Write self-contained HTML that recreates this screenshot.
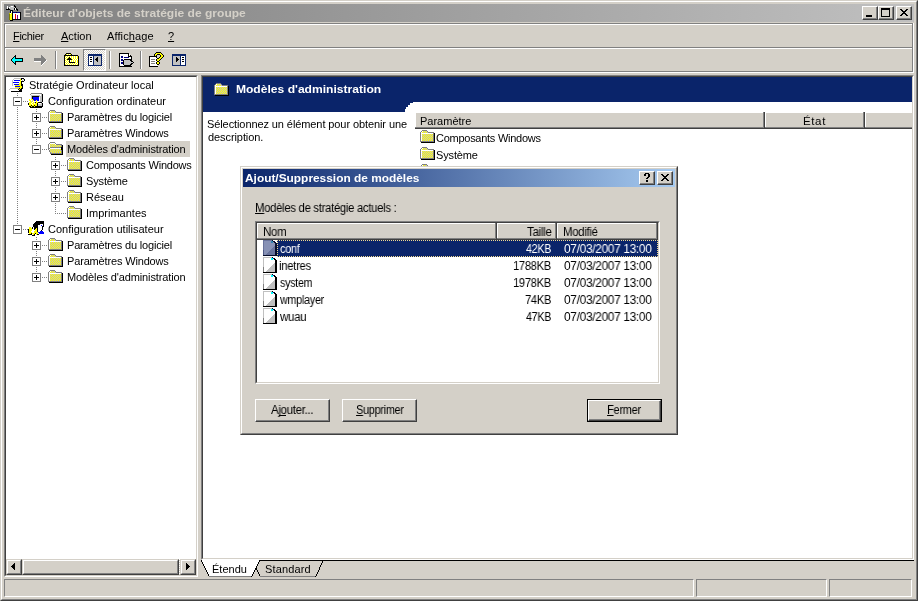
<!DOCTYPE html>
<html><head><meta charset="utf-8">
<style>
*{margin:0;padding:0;box-sizing:border-box}
html,body{width:918px;height:601px;overflow:hidden;background:#d4d0c8}
body{position:relative;font-family:"Liberation Sans",sans-serif;font-size:11px;color:#000}
.a{position:absolute}
.t{position:absolute;white-space:nowrap;line-height:13px;will-change:transform}
.raised{border:1px solid;border-color:#fff #404040 #404040 #fff;box-shadow:inset -1px -1px #808080;background:#d4d0c8}
.thin{border:1px solid;border-color:#808080 #fff #fff #808080}
.u{text-decoration:underline;text-decoration-skip-ink:none}
svg.a{overflow:visible}
</style></head><body>

<div class="a" style="left:0;top:0;width:918px;height:601px;border:1px solid;border-color:#d4d0c8 #404040 #404040 #d4d0c8"></div>
<div class="a" style="left:1px;top:1px;width:916px;height:599px;border:1px solid;border-color:#fff #808080 #808080 #fff"></div>
<div class="a" style="left:4px;top:4px;width:910px;height:18px;background:linear-gradient(to right,#808080,#c0c0c0)"></div>
<svg class="a" style="left:6px;top:5px" width="16" height="16" shape-rendering="crispEdges"><path fill="#000000" d="M8 0h1v1h-1zM8 1h2v1h-2zM9 2h1v1h-1zM2 3h1v1h-1zM8 3h1v1h-1zM10 3h1v1h-1zM0 4h4v1h-4zM8 4h1v1h-1zM10 4h2v1h-2zM4 5h3v1h-3zM11 5h1v1h-1zM4 6h1v1h-1zM6 6h1v1h-1zM4 7h1v1h-1zM6 7h1v1h-1zM10 7h1v1h-1zM14 7h1v1h-1zM6 8h1v1h-1zM14 8h1v1h-1zM6 9h1v1h-1zM14 9h1v1h-1zM6 10h1v1h-1zM14 10h1v1h-1zM6 11h1v1h-1zM14 11h1v1h-1zM6 12h1v1h-1zM14 12h1v1h-1zM6 13h1v1h-1zM14 13h1v1h-1zM6 14h9v1h-9zM4 15h3v1h-3z"/><path fill="#ffffff" d="M1 1h1v1h-1zM5 1h2v1h-2zM1 2h1v1h-1zM3 2h1v1h-1zM1 3h1v1h-1zM9 3h1v1h-1zM9 4h1v1h-1zM5 6h1v1h-1zM5 7h1v1h-1zM4 8h1v1h-1zM7 8h7v1h-7zM7 9h2v1h-2zM10 9h4v1h-4zM7 10h2v1h-2zM10 10h1v1h-1zM12 10h2v1h-2zM7 11h2v1h-2zM10 11h1v1h-1zM12 11h2v1h-2zM7 12h2v1h-2zM10 12h1v1h-1zM12 12h2v1h-2zM7 13h2v1h-2zM10 13h1v1h-1zM12 13h2v1h-2z"/><path fill="#c0c0c0" d="M4 1h1v1h-1zM7 1h1v1h-1zM4 2h5v1h-5zM3 3h5v1h-5zM5 4h3v1h-3z"/><path fill="#000080" d="M7 7h3v1h-3zM11 7h3v1h-3z"/><path fill="#c0c000" d="M3 8h1v1h-1z"/><path fill="#ffff00" d="M5 8h1v1h-1zM4 9h2v1h-2zM4 10h2v1h-2zM4 11h2v1h-2zM4 12h2v1h-2zM4 13h2v1h-2zM4 14h2v1h-2z"/><path fill="#808000" d="M3 9h1v1h-1zM3 10h1v1h-1zM3 11h1v1h-1zM3 12h1v1h-1zM3 13h1v1h-1zM3 14h1v1h-1z"/><path fill="#ff0000" d="M9 9h1v1h-1zM9 10h1v1h-1zM9 11h1v1h-1zM9 12h1v1h-1zM9 13h1v1h-1z"/><path fill="#800080" d="M11 10h1v1h-1zM11 11h1v1h-1zM11 12h1v1h-1zM11 13h1v1h-1z"/></svg>
<div class="t" style="left:23px;top:7px;font-size:11px;letter-spacing:0.0px;font-weight:bold;transform:scaleX(1.0941);transform-origin:1px 0;color:#d4d0c8">Éditeur d&#x27;objets de stratégie de groupe</div>
<div class="a raised" style="left:862px;top:6px;width:16px;height:14px"></div>
<div class="a raised" style="left:878px;top:6px;width:16px;height:14px"></div>
<div class="a raised" style="left:896px;top:6px;width:16px;height:14px"></div>
<div class="a" style="left:866px;top:15px;width:6px;height:2px;background:#000"></div>
<div class="a" style="left:881px;top:8px;width:9px;height:9px;border:1px solid #000;border-top-width:2px"></div>
<svg class="a" style="left:900px;top:9px" width="8" height="7" shape-rendering="crispEdges"><path d="M0 0h2v1h-2zM6 0h2v1h-2zM1 1h2v1h-2zM5 1h2v1h-2zM2 2h4v1h-4zM3 3h2v1h-2zM2 4h4v1h-4zM1 5h2v1h-2zM5 5h2v1h-2zM0 6h2v1h-2zM6 6h2v1h-2z" fill="#000"/></svg>
<div class="a" style="left:4px;top:23px;width:910px;height:1px;background:#808080"></div>
<div class="a" style="left:4px;top:24px;width:909px;height:1px;background:#fff"></div>
<div class="a" style="left:4px;top:23px;width:1px;height:49px;background:#808080"></div>
<div class="a" style="left:5px;top:24px;width:1px;height:48px;background:#fff"></div>
<div class="a" style="left:912px;top:23px;width:1px;height:49px;background:#808080"></div>
<div class="a" style="left:913px;top:23px;width:1px;height:50px;background:#fff"></div>
<div class="a" style="left:5px;top:47px;width:907px;height:1px;background:#808080"></div>
<div class="a" style="left:5px;top:48px;width:907px;height:1px;background:#fff"></div>
<div class="a" style="left:4px;top:71px;width:909px;height:1px;background:#808080"></div>
<div class="a" style="left:4px;top:72px;width:910px;height:1px;background:#fff"></div>
<div class="t" style="left:13px;top:30px;font-size:11px;letter-spacing:-0.3px"><span class="u">F</span>ichier</div>
<div class="t" style="left:61px;top:30px;font-size:11px;letter-spacing:0.0px"><span class="u">A</span>ction</div>
<div class="t" style="left:107px;top:30px;font-size:11px;letter-spacing:0.112px">Affic<span class="u">h</span>age</div>
<div class="t" style="left:168px;top:30px;font-size:11px;letter-spacing:0.0px"><span class="u">?</span></div>
<svg class="a" style="left:11px;top:55px" width="12" height="10" shape-rendering="crispEdges"><path fill="#000000" d="M4 0h1v1h-1zM3 1h2v1h-2zM2 2h1v1h-1zM4 2h1v1h-1zM1 3h1v1h-1zM4 3h8v1h-8zM0 4h1v1h-1zM11 4h1v1h-1zM0 5h1v1h-1zM11 5h1v1h-1zM1 6h1v1h-1zM4 6h8v1h-8zM2 7h1v1h-1zM4 7h1v1h-1zM3 8h2v1h-2zM4 9h1v1h-1z"/><path fill="#00ffff" d="M3 2h1v1h-1zM2 3h2v1h-2zM1 4h10v1h-10zM1 5h10v1h-10zM2 6h2v1h-2zM3 7h1v1h-1z"/></svg>
<svg class="a" style="left:34px;top:55px" width="13" height="11" shape-rendering="crispEdges"><path fill="#808080" d="M7 0h1v1h-1zM7 1h2v1h-2zM7 2h3v1h-3zM0 3h11v1h-11zM0 4h12v1h-12zM0 5h12v1h-12zM7 6h4v1h-4zM7 7h3v1h-3zM7 8h2v1h-2zM7 9h1v1h-1z"/><path fill="#ffffff" d="M12 5h1v1h-1zM0 6h7v1h-7zM11 6h1v1h-1zM10 7h1v1h-1zM9 8h1v1h-1zM8 9h1v1h-1zM7 10h1v1h-1z"/></svg>
<div class="a" style="left:55px;top:51px;width:1px;height:18px;background:#808080"></div>
<div class="a" style="left:56px;top:51px;width:1px;height:18px;background:#fff"></div>
<div class="a" style="left:109px;top:51px;width:1px;height:18px;background:#808080"></div>
<div class="a" style="left:110px;top:51px;width:1px;height:18px;background:#fff"></div>
<div class="a" style="left:140px;top:51px;width:1px;height:18px;background:#808080"></div>
<div class="a" style="left:141px;top:51px;width:1px;height:18px;background:#fff"></div>
<svg class="a" style="left:64px;top:53px" width="15" height="13" shape-rendering="crispEdges"><path fill="#000000" d="M2 0h5v1h-5zM1 1h1v1h-1zM7 1h1v1h-1zM0 2h14v1h-14zM0 3h1v1h-1zM14 3h1v1h-1zM0 4h1v1h-1zM5 4h1v1h-1zM14 4h1v1h-1zM0 5h1v1h-1zM4 5h3v1h-3zM14 5h1v1h-1zM0 6h1v1h-1zM3 6h5v1h-5zM14 6h1v1h-1zM0 7h1v1h-1zM5 7h1v1h-1zM14 7h1v1h-1zM0 8h1v1h-1zM5 8h1v1h-1zM14 8h1v1h-1zM0 9h1v1h-1zM5 9h6v1h-6zM14 9h1v1h-1zM0 10h1v1h-1zM14 10h1v1h-1zM0 11h1v1h-1zM14 11h1v1h-1zM0 12h15v1h-15z"/><path fill="#ffff00" d="M2 1h1v1h-1zM4 1h1v1h-1zM6 1h1v1h-1zM1 3h1v1h-1zM3 3h1v1h-1zM5 3h1v1h-1zM7 3h1v1h-1zM9 3h1v1h-1zM11 3h1v1h-1zM13 3h1v1h-1zM2 4h1v1h-1zM4 4h1v1h-1zM7 4h1v1h-1zM9 4h1v1h-1zM11 4h1v1h-1zM13 4h1v1h-1zM1 5h1v1h-1zM3 5h1v1h-1zM7 5h1v1h-1zM9 5h1v1h-1zM11 5h1v1h-1zM13 5h1v1h-1zM2 6h1v1h-1zM8 6h1v1h-1zM10 6h1v1h-1zM12 6h1v1h-1zM1 7h1v1h-1zM3 7h1v1h-1zM7 7h1v1h-1zM9 7h1v1h-1zM11 7h1v1h-1zM13 7h1v1h-1zM2 8h1v1h-1zM4 8h1v1h-1zM7 8h1v1h-1zM9 8h1v1h-1zM11 8h1v1h-1zM13 8h1v1h-1zM1 9h1v1h-1zM3 9h1v1h-1zM11 9h1v1h-1zM13 9h1v1h-1zM2 10h1v1h-1zM4 10h1v1h-1zM6 10h1v1h-1zM8 10h1v1h-1zM10 10h1v1h-1zM12 10h1v1h-1zM1 11h1v1h-1zM3 11h1v1h-1zM5 11h1v1h-1zM7 11h1v1h-1zM9 11h1v1h-1zM11 11h1v1h-1zM13 11h1v1h-1z"/><path fill="#ffffff" d="M3 1h1v1h-1zM5 1h1v1h-1zM2 3h1v1h-1zM4 3h1v1h-1zM6 3h1v1h-1zM8 3h1v1h-1zM10 3h1v1h-1zM12 3h1v1h-1zM1 4h1v1h-1zM3 4h1v1h-1zM6 4h1v1h-1zM8 4h1v1h-1zM10 4h1v1h-1zM12 4h1v1h-1zM2 5h1v1h-1zM8 5h1v1h-1zM10 5h1v1h-1zM12 5h1v1h-1zM1 6h1v1h-1zM9 6h1v1h-1zM11 6h1v1h-1zM13 6h1v1h-1zM2 7h1v1h-1zM4 7h1v1h-1zM6 7h1v1h-1zM8 7h1v1h-1zM10 7h1v1h-1zM12 7h1v1h-1zM1 8h1v1h-1zM3 8h1v1h-1zM6 8h1v1h-1zM8 8h1v1h-1zM10 8h1v1h-1zM12 8h1v1h-1zM2 9h1v1h-1zM4 9h1v1h-1zM12 9h1v1h-1zM1 10h1v1h-1zM3 10h1v1h-1zM5 10h1v1h-1zM7 10h1v1h-1zM9 10h1v1h-1zM11 10h1v1h-1zM13 10h1v1h-1zM2 11h1v1h-1zM4 11h1v1h-1zM6 11h1v1h-1zM8 11h1v1h-1zM10 11h1v1h-1zM12 11h1v1h-1z"/></svg>
<div class="a" style="left:83px;top:49px;width:23px;height:22px;border:1px solid;border-color:#808080 #fff #fff #808080;background:repeating-conic-gradient(#fff 0 25%,#d4d0c8 0 50%) 0 0/2px 2px"></div>
<svg class="a" style="left:88px;top:54px" width="14" height="12" shape-rendering="crispEdges"><path fill="#0a246a" d="M0 0h14v1h-14zM0 1h14v1h-14zM0 2h1v1h-1zM5 2h1v1h-1zM13 2h1v1h-1zM0 3h1v1h-1zM5 3h1v1h-1zM13 3h1v1h-1zM0 4h1v1h-1zM5 4h1v1h-1zM13 4h1v1h-1zM0 5h1v1h-1zM5 5h1v1h-1zM13 5h1v1h-1zM0 6h1v1h-1zM5 6h1v1h-1zM13 6h1v1h-1zM0 7h1v1h-1zM5 7h1v1h-1zM13 7h1v1h-1zM0 8h1v1h-1zM5 8h1v1h-1zM13 8h1v1h-1zM0 9h1v1h-1zM5 9h1v1h-1zM13 9h1v1h-1zM0 10h1v1h-1zM5 10h1v1h-1zM13 10h1v1h-1zM0 11h14v1h-14z"/><path fill="#ffffff" d="M1 2h4v1h-4zM1 3h1v1h-1zM4 3h1v1h-1zM1 4h4v1h-4zM1 5h1v1h-1zM4 5h1v1h-1zM1 6h4v1h-4zM1 7h1v1h-1zM4 7h1v1h-1zM1 8h4v1h-4zM1 9h4v1h-4zM1 10h4v1h-4z"/><path fill="#c0c0c0" d="M6 2h7v1h-7zM6 3h3v1h-3zM10 3h3v1h-3zM6 4h2v1h-2zM10 4h3v1h-3zM6 5h1v1h-1zM10 5h3v1h-3zM6 6h2v1h-2zM10 6h3v1h-3zM6 7h3v1h-3zM10 7h3v1h-3zM6 8h7v1h-7zM6 9h7v1h-7zM6 10h7v1h-7z"/><path fill="#000000" d="M2 3h2v1h-2zM9 3h1v1h-1zM8 4h2v1h-2zM2 5h2v1h-2zM7 5h3v1h-3zM8 6h2v1h-2zM2 7h2v1h-2zM9 7h1v1h-1z"/></svg>
<svg class="a" style="left:119px;top:53px" width="15" height="14" shape-rendering="crispEdges"><path fill="#000000" d="M0 0h10v1h-10zM0 1h1v1h-1zM9 1h1v1h-1zM0 2h1v1h-1zM9 2h1v1h-1zM11 2h1v1h-1zM0 3h1v1h-1zM9 3h4v1h-4zM0 4h1v1h-1zM12 4h1v1h-1zM0 5h1v1h-1zM12 5h1v1h-1zM0 6h1v1h-1zM5 6h8v1h-8zM0 7h1v1h-1zM4 7h1v1h-1zM11 7h2v1h-2zM0 8h1v1h-1zM4 8h1v1h-1zM12 8h2v1h-2zM0 9h1v1h-1zM4 9h1v1h-1zM14 9h1v1h-1zM0 10h1v1h-1zM4 10h1v1h-1zM12 10h2v1h-2zM0 11h1v1h-1zM4 11h1v1h-1zM11 11h2v1h-2zM0 12h1v1h-1zM5 12h7v1h-7zM0 13h13v1h-13z"/><path fill="#ffffff" d="M1 1h8v1h-8zM10 1h1v1h-1zM1 2h8v1h-8zM10 2h1v1h-1zM1 3h1v1h-1zM4 3h5v1h-5zM1 4h1v1h-1zM4 4h1v1h-1zM10 4h2v1h-2zM1 5h11v1h-11zM1 6h1v1h-1zM4 6h1v1h-1zM1 7h1v1h-1zM1 8h3v1h-3zM1 9h1v1h-1zM1 10h1v1h-1zM1 11h3v1h-3zM1 12h4v1h-4z"/><path fill="#000080" d="M2 3h2v1h-2zM2 4h2v1h-2zM5 4h5v1h-5zM2 6h2v1h-2zM2 7h2v1h-2zM2 9h2v1h-2zM2 10h2v1h-2z"/><path fill="#c0c0c0" d="M5 7h6v1h-6zM5 8h7v1h-7zM5 9h9v1h-9zM5 10h7v1h-7zM5 11h6v1h-6z"/></svg>
<svg class="a" style="left:149px;top:52px" width="15" height="15" shape-rendering="crispEdges"><path fill="#000000" d="M7 0h5v1h-5zM6 1h1v1h-1zM12 1h1v1h-1zM5 2h1v1h-1zM8 2h3v1h-3zM13 2h1v1h-1zM5 3h1v1h-1zM7 3h1v1h-1zM11 3h1v1h-1zM14 3h1v1h-1zM0 4h8v1h-8zM11 4h1v1h-1zM14 4h1v1h-1zM0 5h1v1h-1zM7 5h1v1h-1zM10 5h1v1h-1zM13 5h1v1h-1zM0 6h1v1h-1zM8 6h2v1h-2zM12 6h1v1h-1zM0 7h1v1h-1zM7 7h1v1h-1zM11 7h1v1h-1zM0 8h1v1h-1zM7 8h1v1h-1zM10 8h1v1h-1zM0 9h1v1h-1zM8 9h2v1h-2zM0 10h1v1h-1zM7 10h1v1h-1zM10 10h1v1h-1zM0 11h1v1h-1zM7 11h1v1h-1zM10 11h1v1h-1zM0 12h1v1h-1zM8 12h2v1h-2zM0 13h1v1h-1zM0 14h9v1h-9z"/><path fill="#ffff00" d="M7 1h5v1h-5zM6 2h2v1h-2zM11 2h2v1h-2zM6 3h1v1h-1zM12 3h2v1h-2zM12 4h2v1h-2zM11 5h2v1h-2zM10 6h2v1h-2zM8 7h3v1h-3zM8 8h2v1h-2zM8 10h2v1h-2zM8 11h2v1h-2z"/><path fill="#ffffff" d="M1 5h6v1h-6zM1 6h7v1h-7zM1 7h1v1h-1zM6 7h1v1h-1zM1 8h6v1h-6zM1 9h1v1h-1zM6 9h2v1h-2zM1 10h6v1h-6zM1 11h1v1h-1zM6 11h1v1h-1zM1 12h7v1h-7zM1 13h8v1h-8z"/><path fill="#808080" d="M2 7h4v1h-4zM2 9h4v1h-4zM2 11h4v1h-4z"/></svg>
<svg class="a" style="left:172px;top:54px" width="14" height="12" shape-rendering="crispEdges"><path fill="#0a246a" d="M0 0h14v1h-14zM0 1h14v1h-14zM0 2h1v1h-1zM8 2h1v1h-1zM13 2h1v1h-1zM0 3h1v1h-1zM8 3h1v1h-1zM13 3h1v1h-1zM0 4h1v1h-1zM8 4h1v1h-1zM13 4h1v1h-1zM0 5h1v1h-1zM8 5h1v1h-1zM13 5h1v1h-1zM0 6h1v1h-1zM8 6h1v1h-1zM13 6h1v1h-1zM0 7h1v1h-1zM8 7h1v1h-1zM13 7h1v1h-1zM0 8h1v1h-1zM8 8h1v1h-1zM13 8h1v1h-1zM0 9h1v1h-1zM8 9h1v1h-1zM13 9h1v1h-1zM0 10h1v1h-1zM8 10h1v1h-1zM13 10h1v1h-1zM0 11h14v1h-14z"/><path fill="#c0c0c0" d="M1 2h7v1h-7zM1 3h3v1h-3zM5 3h3v1h-3zM1 4h3v1h-3zM6 4h2v1h-2zM1 5h3v1h-3zM7 5h1v1h-1zM1 6h3v1h-3zM6 6h2v1h-2zM1 7h3v1h-3zM5 7h3v1h-3zM1 8h7v1h-7zM1 9h7v1h-7zM1 10h7v1h-7z"/><path fill="#ffffff" d="M9 2h4v1h-4zM9 3h1v1h-1zM12 3h1v1h-1zM9 4h4v1h-4zM9 5h1v1h-1zM12 5h1v1h-1zM9 6h4v1h-4zM9 7h1v1h-1zM12 7h1v1h-1zM9 8h4v1h-4zM9 9h4v1h-4zM9 10h4v1h-4z"/><path fill="#000000" d="M4 3h1v1h-1zM10 3h2v1h-2zM4 4h2v1h-2zM4 5h3v1h-3zM10 5h2v1h-2zM4 6h2v1h-2zM4 7h1v1h-1zM10 7h2v1h-2z"/></svg>
<div class="a" style="left:4px;top:75px;width:194px;height:502px;background:#fff;border:1px solid;border-color:#808080 #fff #fff #808080"><div class="a" style="left:0;top:0;right:0;bottom:0;border:1px solid;border-color:#404040 #d4d0c8 #d4d0c8 #404040"></div></div>
<div class="a" style="left:66px;top:141px;width:124px;height:16px;background:#d4d0c8"></div>
<div class="a" style="left:17px;top:93px;width:1px;height:137px;background:repeating-linear-gradient(to bottom,#808080 0 1px,transparent 1px 2px)"></div>
<div class="a" style="left:36px;top:109px;width:1px;height:41px;background:repeating-linear-gradient(to bottom,#808080 0 1px,transparent 1px 2px)"></div>
<div class="a" style="left:55px;top:157px;width:1px;height:57px;background:repeating-linear-gradient(to bottom,#808080 0 1px,transparent 1px 2px)"></div>
<div class="a" style="left:36px;top:237px;width:1px;height:41px;background:repeating-linear-gradient(to bottom,#808080 0 1px,transparent 1px 2px)"></div>
<div class="a" style="left:23px;top:101px;width:6px;height:1px;background:repeating-linear-gradient(to right,#808080 0 1px,transparent 1px 2px)"></div>
<div class="a" style="left:23px;top:229px;width:6px;height:1px;background:repeating-linear-gradient(to right,#808080 0 1px,transparent 1px 2px)"></div>
<div class="a" style="left:42px;top:117px;width:6px;height:1px;background:repeating-linear-gradient(to right,#808080 0 1px,transparent 1px 2px)"></div>
<div class="a" style="left:42px;top:133px;width:6px;height:1px;background:repeating-linear-gradient(to right,#808080 0 1px,transparent 1px 2px)"></div>
<div class="a" style="left:42px;top:149px;width:6px;height:1px;background:repeating-linear-gradient(to right,#808080 0 1px,transparent 1px 2px)"></div>
<div class="a" style="left:42px;top:245px;width:6px;height:1px;background:repeating-linear-gradient(to right,#808080 0 1px,transparent 1px 2px)"></div>
<div class="a" style="left:42px;top:261px;width:6px;height:1px;background:repeating-linear-gradient(to right,#808080 0 1px,transparent 1px 2px)"></div>
<div class="a" style="left:42px;top:277px;width:6px;height:1px;background:repeating-linear-gradient(to right,#808080 0 1px,transparent 1px 2px)"></div>
<div class="a" style="left:61px;top:165px;width:6px;height:1px;background:repeating-linear-gradient(to right,#808080 0 1px,transparent 1px 2px)"></div>
<div class="a" style="left:61px;top:181px;width:6px;height:1px;background:repeating-linear-gradient(to right,#808080 0 1px,transparent 1px 2px)"></div>
<div class="a" style="left:61px;top:197px;width:6px;height:1px;background:repeating-linear-gradient(to right,#808080 0 1px,transparent 1px 2px)"></div>
<div class="a" style="left:55px;top:213px;width:12px;height:1px;background:repeating-linear-gradient(to right,#808080 0 1px,transparent 1px 2px)"></div>
<div class="a" style="left:13px;top:97px;width:9px;height:9px;border:1px solid #808080;background:#fff"></div><div class="a" style="left:15px;top:101px;width:5px;height:1px;background:#000"></div>
<div class="a" style="left:13px;top:225px;width:9px;height:9px;border:1px solid #808080;background:#fff"></div><div class="a" style="left:15px;top:229px;width:5px;height:1px;background:#000"></div>
<div class="a" style="left:32px;top:113px;width:9px;height:9px;border:1px solid #808080;background:#fff"></div><div class="a" style="left:34px;top:117px;width:5px;height:1px;background:#000"></div><div class="a" style="left:36px;top:115px;width:1px;height:5px;background:#000"></div>
<div class="a" style="left:32px;top:129px;width:9px;height:9px;border:1px solid #808080;background:#fff"></div><div class="a" style="left:34px;top:133px;width:5px;height:1px;background:#000"></div><div class="a" style="left:36px;top:131px;width:1px;height:5px;background:#000"></div>
<div class="a" style="left:32px;top:241px;width:9px;height:9px;border:1px solid #808080;background:#fff"></div><div class="a" style="left:34px;top:245px;width:5px;height:1px;background:#000"></div><div class="a" style="left:36px;top:243px;width:1px;height:5px;background:#000"></div>
<div class="a" style="left:32px;top:257px;width:9px;height:9px;border:1px solid #808080;background:#fff"></div><div class="a" style="left:34px;top:261px;width:5px;height:1px;background:#000"></div><div class="a" style="left:36px;top:259px;width:1px;height:5px;background:#000"></div>
<div class="a" style="left:32px;top:273px;width:9px;height:9px;border:1px solid #808080;background:#fff"></div><div class="a" style="left:34px;top:277px;width:5px;height:1px;background:#000"></div><div class="a" style="left:36px;top:275px;width:1px;height:5px;background:#000"></div>
<div class="a" style="left:32px;top:145px;width:9px;height:9px;border:1px solid #808080;background:#fff"></div><div class="a" style="left:34px;top:149px;width:5px;height:1px;background:#000"></div>
<div class="a" style="left:51px;top:161px;width:9px;height:9px;border:1px solid #808080;background:#fff"></div><div class="a" style="left:53px;top:165px;width:5px;height:1px;background:#000"></div><div class="a" style="left:55px;top:163px;width:1px;height:5px;background:#000"></div>
<div class="a" style="left:51px;top:177px;width:9px;height:9px;border:1px solid #808080;background:#fff"></div><div class="a" style="left:53px;top:181px;width:5px;height:1px;background:#000"></div><div class="a" style="left:55px;top:179px;width:1px;height:5px;background:#000"></div>
<div class="a" style="left:51px;top:193px;width:9px;height:9px;border:1px solid #808080;background:#fff"></div><div class="a" style="left:53px;top:197px;width:5px;height:1px;background:#000"></div><div class="a" style="left:55px;top:195px;width:1px;height:5px;background:#000"></div>
<svg class="a" style="left:9px;top:78px" width="16" height="14" shape-rendering="crispEdges"><path fill="#c0c0c0" d="M5 0h7v1h-7zM4 1h1v1h-1zM14 1h1v1h-1zM3 2h1v1h-1zM13 2h1v1h-1zM3 3h1v1h-1zM3 4h1v1h-1zM3 5h1v1h-1zM3 6h1v1h-1zM3 7h1v1h-1zM1 10h9v1h-9zM0 11h1v1h-1z"/><path fill="#000000" d="M12 0h3v1h-3zM12 1h1v1h-1zM15 1h1v1h-1zM15 2h1v1h-1zM12 3h3v1h-3zM12 4h1v1h-1zM12 5h1v1h-1zM12 6h2v1h-2zM12 7h2v1h-2zM13 8h1v1h-1zM13 9h1v1h-1zM10 10h1v1h-1zM12 10h2v1h-2zM9 11h1v1h-1zM11 11h2v1h-2zM10 12h3v1h-3zM2 13h11v1h-11z"/><path fill="#ffffff" d="M5 1h6v1h-6zM13 1h1v1h-1zM4 2h1v1h-1zM12 2h1v1h-1zM14 2h1v1h-1zM4 3h7v1h-7zM10 4h1v1h-1zM4 5h6v1h-6zM4 6h1v1h-1zM4 7h2v1h-2zM4 8h2v1h-2zM4 9h2v1h-2zM1 11h8v1h-8zM1 12h9v1h-9z"/><path fill="#ffff00" d="M11 1h1v1h-1zM11 2h1v1h-1zM11 3h1v1h-1zM11 4h1v1h-1zM10 5h2v1h-2zM10 6h2v1h-2zM6 7h6v1h-6zM11 8h2v1h-2zM6 9h7v1h-7zM11 10h1v1h-1zM10 11h1v1h-1z"/><path fill="#0000ff" d="M5 2h6v1h-6zM4 4h6v1h-6zM5 6h5v1h-5zM6 8h5v1h-5z"/></svg>
<svg class="a" style="left:28px;top:92px" width="16" height="16" shape-rendering="crispEdges"><path fill="#808080" d="M3 1h11v1h-11zM2 2h1v1h-1z"/><path fill="#ffffff" d="M3 2h10v1h-10zM2 3h1v1h-1zM12 3h1v1h-1zM2 4h1v1h-1zM2 5h1v1h-1zM11 5h1v1h-1zM2 6h1v1h-1zM11 6h1v1h-1zM2 7h1v1h-1zM11 7h1v1h-1zM3 8h1v1h-1zM11 8h1v1h-1zM5 9h3v1h-3zM9 9h3v1h-3zM4 10h1v1h-1zM3 11h1v1h-1zM6 11h1v1h-1zM10 11h3v1h-3zM4 12h1v1h-1z"/><path fill="#c0c0c0" d="M13 2h1v1h-1zM3 3h9v1h-9zM13 3h1v1h-1zM3 4h1v1h-1zM11 4h3v1h-3zM3 5h1v1h-1zM12 5h2v1h-2zM3 6h1v1h-1zM12 6h2v1h-2zM12 7h2v1h-2zM4 8h1v1h-1zM12 8h2v1h-2zM3 9h1v1h-1zM12 9h2v1h-2zM6 10h1v1h-1zM13 11h1v1h-1zM10 12h4v1h-4zM10 13h4v1h-4z"/><path fill="#000000" d="M14 2h1v1h-1zM14 3h1v1h-1zM4 4h7v1h-7zM14 4h1v1h-1zM4 5h1v1h-1zM14 5h1v1h-1zM4 6h1v1h-1zM14 6h1v1h-1zM14 7h1v1h-1zM14 8h1v1h-1zM14 9h1v1h-1zM7 10h1v1h-1zM10 10h4v1h-4zM0 11h1v1h-1zM9 11h1v1h-1zM14 11h1v1h-1zM0 12h1v1h-1zM9 12h1v1h-1zM14 12h1v1h-1zM3 13h1v1h-1zM6 13h1v1h-1zM9 13h1v1h-1zM14 13h1v1h-1zM1 14h2v1h-2zM4 14h2v1h-2zM7 14h8v1h-8zM2 15h12v1h-12z"/><path fill="#0000ff" d="M5 5h6v1h-6zM5 6h6v1h-6zM5 7h6v1h-6zM6 8h2v1h-2zM9 8h2v1h-2z"/><path fill="#ffff00" d="M1 7h1v1h-1zM3 7h2v1h-2zM1 8h2v1h-2zM5 8h1v1h-1zM8 8h1v1h-1zM2 9h1v1h-1zM4 9h1v1h-1zM8 9h1v1h-1zM1 10h3v1h-3zM5 10h1v1h-1zM8 10h2v1h-2zM1 11h2v1h-2zM4 11h2v1h-2zM7 11h2v1h-2zM1 12h3v1h-3zM5 12h4v1h-4zM1 13h2v1h-2zM4 13h2v1h-2zM7 13h2v1h-2zM3 14h1v1h-1zM6 14h1v1h-1z"/></svg>
<svg class="a" style="left:28px;top:221px" width="17" height="15" shape-rendering="crispEdges"><path fill="#000000" d="M8 0h8v1h-8zM7 1h9v1h-9zM6 2h10v1h-10zM5 3h7v1h-7zM15 3h1v1h-1zM5 4h5v1h-5zM15 4h1v1h-1zM5 5h5v1h-5zM14 5h2v1h-2zM4 6h1v1h-1zM6 6h4v1h-4zM14 6h1v1h-1zM4 7h1v1h-1zM6 7h2v1h-2zM9 7h1v1h-1zM14 7h1v1h-1zM0 8h1v1h-1zM6 8h1v1h-1zM9 8h1v1h-1zM14 8h1v1h-1zM0 9h1v1h-1zM9 9h1v1h-1zM13 9h1v1h-1zM0 10h1v1h-1zM9 10h1v1h-1zM0 11h1v1h-1zM3 12h1v1h-1zM7 12h1v1h-1zM0 13h4v1h-4zM6 13h1v1h-1zM9 13h2v1h-2zM4 14h3v1h-3z"/><path fill="#ffffff" d="M12 3h3v1h-3zM10 4h3v1h-3zM14 4h1v1h-1zM10 5h4v1h-4zM5 6h1v1h-1zM10 6h4v1h-4zM5 7h1v1h-1zM10 7h4v1h-4zM4 8h2v1h-2zM10 8h4v1h-4zM4 9h3v1h-3zM10 9h3v1h-3zM3 10h3v1h-3zM10 10h2v1h-2zM4 11h2v1h-2z"/><path fill="#0000ff" d="M13 4h1v1h-1zM12 10h3v1h-3zM10 11h6v1h-6zM11 12h5v1h-5z"/><path fill="#ffff00" d="M1 6h2v1h-2zM1 7h3v1h-3zM8 7h1v1h-1zM1 8h3v1h-3zM7 8h2v1h-2zM1 9h3v1h-3zM7 9h2v1h-2zM1 10h2v1h-2zM6 10h3v1h-3zM1 11h3v1h-3zM6 11h4v1h-4zM1 12h2v1h-2zM4 12h3v1h-3zM8 12h2v1h-2zM5 13h1v1h-1zM8 13h1v1h-1z"/></svg>
<svg class="a" style="left:48px;top:110px" width="15" height="13" shape-rendering="crispEdges"><path fill="#808080" d="M2 0h5v1h-5zM1 1h1v1h-1zM7 1h1v1h-1zM0 2h1v1h-1zM8 2h6v1h-6zM0 3h1v1h-1zM13 3h1v1h-1zM0 4h1v1h-1zM13 4h1v1h-1zM0 5h1v1h-1zM13 5h1v1h-1zM0 6h1v1h-1zM13 6h1v1h-1zM0 7h1v1h-1zM13 7h1v1h-1zM0 8h1v1h-1zM13 8h1v1h-1zM0 9h1v1h-1zM13 9h1v1h-1zM0 10h1v1h-1zM13 10h1v1h-1zM0 11h14v1h-14z"/><path fill="#ffffff" d="M2 1h1v1h-1zM1 2h1v1h-1zM1 3h12v1h-12zM1 4h1v1h-1zM1 5h1v1h-1zM1 6h1v1h-1zM1 7h1v1h-1zM1 8h1v1h-1zM1 9h1v1h-1zM1 10h1v1h-1z"/><path fill="#ffff00" d="M3 1h1v1h-1zM5 1h1v1h-1zM2 2h1v1h-1zM4 2h1v1h-1zM6 2h1v1h-1zM2 4h1v1h-1zM4 4h1v1h-1zM6 4h1v1h-1zM8 4h1v1h-1zM10 4h1v1h-1zM12 4h1v1h-1zM3 5h1v1h-1zM5 5h1v1h-1zM7 5h1v1h-1zM9 5h1v1h-1zM11 5h1v1h-1zM2 6h1v1h-1zM4 6h1v1h-1zM6 6h1v1h-1zM8 6h1v1h-1zM10 6h1v1h-1zM12 6h1v1h-1zM3 7h1v1h-1zM5 7h1v1h-1zM7 7h1v1h-1zM9 7h1v1h-1zM11 7h1v1h-1zM2 8h1v1h-1zM4 8h1v1h-1zM6 8h1v1h-1zM8 8h1v1h-1zM10 8h1v1h-1zM12 8h1v1h-1zM3 9h1v1h-1zM5 9h1v1h-1zM7 9h1v1h-1zM9 9h1v1h-1zM11 9h1v1h-1zM2 10h1v1h-1zM4 10h1v1h-1zM6 10h1v1h-1zM8 10h1v1h-1zM10 10h1v1h-1zM12 10h1v1h-1z"/><path fill="#c0c0c0" d="M4 1h1v1h-1zM6 1h1v1h-1zM3 2h1v1h-1zM5 2h1v1h-1zM7 2h1v1h-1zM3 4h1v1h-1zM5 4h1v1h-1zM7 4h1v1h-1zM9 4h1v1h-1zM11 4h1v1h-1zM2 5h1v1h-1zM4 5h1v1h-1zM6 5h1v1h-1zM8 5h1v1h-1zM10 5h1v1h-1zM12 5h1v1h-1zM3 6h1v1h-1zM5 6h1v1h-1zM7 6h1v1h-1zM9 6h1v1h-1zM11 6h1v1h-1zM2 7h1v1h-1zM4 7h1v1h-1zM6 7h1v1h-1zM8 7h1v1h-1zM10 7h1v1h-1zM12 7h1v1h-1zM3 8h1v1h-1zM5 8h1v1h-1zM7 8h1v1h-1zM9 8h1v1h-1zM11 8h1v1h-1zM2 9h1v1h-1zM4 9h1v1h-1zM6 9h1v1h-1zM8 9h1v1h-1zM10 9h1v1h-1zM12 9h1v1h-1zM3 10h1v1h-1zM5 10h1v1h-1zM7 10h1v1h-1zM9 10h1v1h-1zM11 10h1v1h-1z"/><path fill="#000000" d="M14 3h1v1h-1zM14 4h1v1h-1zM14 5h1v1h-1zM14 6h1v1h-1zM14 7h1v1h-1zM14 8h1v1h-1zM14 9h1v1h-1zM14 10h1v1h-1zM14 11h1v1h-1zM1 12h14v1h-14z"/></svg>
<svg class="a" style="left:48px;top:126px" width="15" height="13" shape-rendering="crispEdges"><path fill="#808080" d="M2 0h5v1h-5zM1 1h1v1h-1zM7 1h1v1h-1zM0 2h1v1h-1zM8 2h6v1h-6zM0 3h1v1h-1zM13 3h1v1h-1zM0 4h1v1h-1zM13 4h1v1h-1zM0 5h1v1h-1zM13 5h1v1h-1zM0 6h1v1h-1zM13 6h1v1h-1zM0 7h1v1h-1zM13 7h1v1h-1zM0 8h1v1h-1zM13 8h1v1h-1zM0 9h1v1h-1zM13 9h1v1h-1zM0 10h1v1h-1zM13 10h1v1h-1zM0 11h14v1h-14z"/><path fill="#ffffff" d="M2 1h1v1h-1zM1 2h1v1h-1zM1 3h12v1h-12zM1 4h1v1h-1zM1 5h1v1h-1zM1 6h1v1h-1zM1 7h1v1h-1zM1 8h1v1h-1zM1 9h1v1h-1zM1 10h1v1h-1z"/><path fill="#ffff00" d="M3 1h1v1h-1zM5 1h1v1h-1zM2 2h1v1h-1zM4 2h1v1h-1zM6 2h1v1h-1zM2 4h1v1h-1zM4 4h1v1h-1zM6 4h1v1h-1zM8 4h1v1h-1zM10 4h1v1h-1zM12 4h1v1h-1zM3 5h1v1h-1zM5 5h1v1h-1zM7 5h1v1h-1zM9 5h1v1h-1zM11 5h1v1h-1zM2 6h1v1h-1zM4 6h1v1h-1zM6 6h1v1h-1zM8 6h1v1h-1zM10 6h1v1h-1zM12 6h1v1h-1zM3 7h1v1h-1zM5 7h1v1h-1zM7 7h1v1h-1zM9 7h1v1h-1zM11 7h1v1h-1zM2 8h1v1h-1zM4 8h1v1h-1zM6 8h1v1h-1zM8 8h1v1h-1zM10 8h1v1h-1zM12 8h1v1h-1zM3 9h1v1h-1zM5 9h1v1h-1zM7 9h1v1h-1zM9 9h1v1h-1zM11 9h1v1h-1zM2 10h1v1h-1zM4 10h1v1h-1zM6 10h1v1h-1zM8 10h1v1h-1zM10 10h1v1h-1zM12 10h1v1h-1z"/><path fill="#c0c0c0" d="M4 1h1v1h-1zM6 1h1v1h-1zM3 2h1v1h-1zM5 2h1v1h-1zM7 2h1v1h-1zM3 4h1v1h-1zM5 4h1v1h-1zM7 4h1v1h-1zM9 4h1v1h-1zM11 4h1v1h-1zM2 5h1v1h-1zM4 5h1v1h-1zM6 5h1v1h-1zM8 5h1v1h-1zM10 5h1v1h-1zM12 5h1v1h-1zM3 6h1v1h-1zM5 6h1v1h-1zM7 6h1v1h-1zM9 6h1v1h-1zM11 6h1v1h-1zM2 7h1v1h-1zM4 7h1v1h-1zM6 7h1v1h-1zM8 7h1v1h-1zM10 7h1v1h-1zM12 7h1v1h-1zM3 8h1v1h-1zM5 8h1v1h-1zM7 8h1v1h-1zM9 8h1v1h-1zM11 8h1v1h-1zM2 9h1v1h-1zM4 9h1v1h-1zM6 9h1v1h-1zM8 9h1v1h-1zM10 9h1v1h-1zM12 9h1v1h-1zM3 10h1v1h-1zM5 10h1v1h-1zM7 10h1v1h-1zM9 10h1v1h-1zM11 10h1v1h-1z"/><path fill="#000000" d="M14 3h1v1h-1zM14 4h1v1h-1zM14 5h1v1h-1zM14 6h1v1h-1zM14 7h1v1h-1zM14 8h1v1h-1zM14 9h1v1h-1zM14 10h1v1h-1zM14 11h1v1h-1zM1 12h14v1h-14z"/></svg>
<svg class="a" style="left:48px;top:238px" width="15" height="13" shape-rendering="crispEdges"><path fill="#808080" d="M2 0h5v1h-5zM1 1h1v1h-1zM7 1h1v1h-1zM0 2h1v1h-1zM8 2h6v1h-6zM0 3h1v1h-1zM13 3h1v1h-1zM0 4h1v1h-1zM13 4h1v1h-1zM0 5h1v1h-1zM13 5h1v1h-1zM0 6h1v1h-1zM13 6h1v1h-1zM0 7h1v1h-1zM13 7h1v1h-1zM0 8h1v1h-1zM13 8h1v1h-1zM0 9h1v1h-1zM13 9h1v1h-1zM0 10h1v1h-1zM13 10h1v1h-1zM0 11h14v1h-14z"/><path fill="#ffffff" d="M2 1h1v1h-1zM1 2h1v1h-1zM1 3h12v1h-12zM1 4h1v1h-1zM1 5h1v1h-1zM1 6h1v1h-1zM1 7h1v1h-1zM1 8h1v1h-1zM1 9h1v1h-1zM1 10h1v1h-1z"/><path fill="#ffff00" d="M3 1h1v1h-1zM5 1h1v1h-1zM2 2h1v1h-1zM4 2h1v1h-1zM6 2h1v1h-1zM2 4h1v1h-1zM4 4h1v1h-1zM6 4h1v1h-1zM8 4h1v1h-1zM10 4h1v1h-1zM12 4h1v1h-1zM3 5h1v1h-1zM5 5h1v1h-1zM7 5h1v1h-1zM9 5h1v1h-1zM11 5h1v1h-1zM2 6h1v1h-1zM4 6h1v1h-1zM6 6h1v1h-1zM8 6h1v1h-1zM10 6h1v1h-1zM12 6h1v1h-1zM3 7h1v1h-1zM5 7h1v1h-1zM7 7h1v1h-1zM9 7h1v1h-1zM11 7h1v1h-1zM2 8h1v1h-1zM4 8h1v1h-1zM6 8h1v1h-1zM8 8h1v1h-1zM10 8h1v1h-1zM12 8h1v1h-1zM3 9h1v1h-1zM5 9h1v1h-1zM7 9h1v1h-1zM9 9h1v1h-1zM11 9h1v1h-1zM2 10h1v1h-1zM4 10h1v1h-1zM6 10h1v1h-1zM8 10h1v1h-1zM10 10h1v1h-1zM12 10h1v1h-1z"/><path fill="#c0c0c0" d="M4 1h1v1h-1zM6 1h1v1h-1zM3 2h1v1h-1zM5 2h1v1h-1zM7 2h1v1h-1zM3 4h1v1h-1zM5 4h1v1h-1zM7 4h1v1h-1zM9 4h1v1h-1zM11 4h1v1h-1zM2 5h1v1h-1zM4 5h1v1h-1zM6 5h1v1h-1zM8 5h1v1h-1zM10 5h1v1h-1zM12 5h1v1h-1zM3 6h1v1h-1zM5 6h1v1h-1zM7 6h1v1h-1zM9 6h1v1h-1zM11 6h1v1h-1zM2 7h1v1h-1zM4 7h1v1h-1zM6 7h1v1h-1zM8 7h1v1h-1zM10 7h1v1h-1zM12 7h1v1h-1zM3 8h1v1h-1zM5 8h1v1h-1zM7 8h1v1h-1zM9 8h1v1h-1zM11 8h1v1h-1zM2 9h1v1h-1zM4 9h1v1h-1zM6 9h1v1h-1zM8 9h1v1h-1zM10 9h1v1h-1zM12 9h1v1h-1zM3 10h1v1h-1zM5 10h1v1h-1zM7 10h1v1h-1zM9 10h1v1h-1zM11 10h1v1h-1z"/><path fill="#000000" d="M14 3h1v1h-1zM14 4h1v1h-1zM14 5h1v1h-1zM14 6h1v1h-1zM14 7h1v1h-1zM14 8h1v1h-1zM14 9h1v1h-1zM14 10h1v1h-1zM14 11h1v1h-1zM1 12h14v1h-14z"/></svg>
<svg class="a" style="left:48px;top:254px" width="15" height="13" shape-rendering="crispEdges"><path fill="#808080" d="M2 0h5v1h-5zM1 1h1v1h-1zM7 1h1v1h-1zM0 2h1v1h-1zM8 2h6v1h-6zM0 3h1v1h-1zM13 3h1v1h-1zM0 4h1v1h-1zM13 4h1v1h-1zM0 5h1v1h-1zM13 5h1v1h-1zM0 6h1v1h-1zM13 6h1v1h-1zM0 7h1v1h-1zM13 7h1v1h-1zM0 8h1v1h-1zM13 8h1v1h-1zM0 9h1v1h-1zM13 9h1v1h-1zM0 10h1v1h-1zM13 10h1v1h-1zM0 11h14v1h-14z"/><path fill="#ffffff" d="M2 1h1v1h-1zM1 2h1v1h-1zM1 3h12v1h-12zM1 4h1v1h-1zM1 5h1v1h-1zM1 6h1v1h-1zM1 7h1v1h-1zM1 8h1v1h-1zM1 9h1v1h-1zM1 10h1v1h-1z"/><path fill="#ffff00" d="M3 1h1v1h-1zM5 1h1v1h-1zM2 2h1v1h-1zM4 2h1v1h-1zM6 2h1v1h-1zM2 4h1v1h-1zM4 4h1v1h-1zM6 4h1v1h-1zM8 4h1v1h-1zM10 4h1v1h-1zM12 4h1v1h-1zM3 5h1v1h-1zM5 5h1v1h-1zM7 5h1v1h-1zM9 5h1v1h-1zM11 5h1v1h-1zM2 6h1v1h-1zM4 6h1v1h-1zM6 6h1v1h-1zM8 6h1v1h-1zM10 6h1v1h-1zM12 6h1v1h-1zM3 7h1v1h-1zM5 7h1v1h-1zM7 7h1v1h-1zM9 7h1v1h-1zM11 7h1v1h-1zM2 8h1v1h-1zM4 8h1v1h-1zM6 8h1v1h-1zM8 8h1v1h-1zM10 8h1v1h-1zM12 8h1v1h-1zM3 9h1v1h-1zM5 9h1v1h-1zM7 9h1v1h-1zM9 9h1v1h-1zM11 9h1v1h-1zM2 10h1v1h-1zM4 10h1v1h-1zM6 10h1v1h-1zM8 10h1v1h-1zM10 10h1v1h-1zM12 10h1v1h-1z"/><path fill="#c0c0c0" d="M4 1h1v1h-1zM6 1h1v1h-1zM3 2h1v1h-1zM5 2h1v1h-1zM7 2h1v1h-1zM3 4h1v1h-1zM5 4h1v1h-1zM7 4h1v1h-1zM9 4h1v1h-1zM11 4h1v1h-1zM2 5h1v1h-1zM4 5h1v1h-1zM6 5h1v1h-1zM8 5h1v1h-1zM10 5h1v1h-1zM12 5h1v1h-1zM3 6h1v1h-1zM5 6h1v1h-1zM7 6h1v1h-1zM9 6h1v1h-1zM11 6h1v1h-1zM2 7h1v1h-1zM4 7h1v1h-1zM6 7h1v1h-1zM8 7h1v1h-1zM10 7h1v1h-1zM12 7h1v1h-1zM3 8h1v1h-1zM5 8h1v1h-1zM7 8h1v1h-1zM9 8h1v1h-1zM11 8h1v1h-1zM2 9h1v1h-1zM4 9h1v1h-1zM6 9h1v1h-1zM8 9h1v1h-1zM10 9h1v1h-1zM12 9h1v1h-1zM3 10h1v1h-1zM5 10h1v1h-1zM7 10h1v1h-1zM9 10h1v1h-1zM11 10h1v1h-1z"/><path fill="#000000" d="M14 3h1v1h-1zM14 4h1v1h-1zM14 5h1v1h-1zM14 6h1v1h-1zM14 7h1v1h-1zM14 8h1v1h-1zM14 9h1v1h-1zM14 10h1v1h-1zM14 11h1v1h-1zM1 12h14v1h-14z"/></svg>
<svg class="a" style="left:48px;top:270px" width="15" height="13" shape-rendering="crispEdges"><path fill="#808080" d="M2 0h5v1h-5zM1 1h1v1h-1zM7 1h1v1h-1zM0 2h1v1h-1zM8 2h6v1h-6zM0 3h1v1h-1zM13 3h1v1h-1zM0 4h1v1h-1zM13 4h1v1h-1zM0 5h1v1h-1zM13 5h1v1h-1zM0 6h1v1h-1zM13 6h1v1h-1zM0 7h1v1h-1zM13 7h1v1h-1zM0 8h1v1h-1zM13 8h1v1h-1zM0 9h1v1h-1zM13 9h1v1h-1zM0 10h1v1h-1zM13 10h1v1h-1zM0 11h14v1h-14z"/><path fill="#ffffff" d="M2 1h1v1h-1zM1 2h1v1h-1zM1 3h12v1h-12zM1 4h1v1h-1zM1 5h1v1h-1zM1 6h1v1h-1zM1 7h1v1h-1zM1 8h1v1h-1zM1 9h1v1h-1zM1 10h1v1h-1z"/><path fill="#ffff00" d="M3 1h1v1h-1zM5 1h1v1h-1zM2 2h1v1h-1zM4 2h1v1h-1zM6 2h1v1h-1zM2 4h1v1h-1zM4 4h1v1h-1zM6 4h1v1h-1zM8 4h1v1h-1zM10 4h1v1h-1zM12 4h1v1h-1zM3 5h1v1h-1zM5 5h1v1h-1zM7 5h1v1h-1zM9 5h1v1h-1zM11 5h1v1h-1zM2 6h1v1h-1zM4 6h1v1h-1zM6 6h1v1h-1zM8 6h1v1h-1zM10 6h1v1h-1zM12 6h1v1h-1zM3 7h1v1h-1zM5 7h1v1h-1zM7 7h1v1h-1zM9 7h1v1h-1zM11 7h1v1h-1zM2 8h1v1h-1zM4 8h1v1h-1zM6 8h1v1h-1zM8 8h1v1h-1zM10 8h1v1h-1zM12 8h1v1h-1zM3 9h1v1h-1zM5 9h1v1h-1zM7 9h1v1h-1zM9 9h1v1h-1zM11 9h1v1h-1zM2 10h1v1h-1zM4 10h1v1h-1zM6 10h1v1h-1zM8 10h1v1h-1zM10 10h1v1h-1zM12 10h1v1h-1z"/><path fill="#c0c0c0" d="M4 1h1v1h-1zM6 1h1v1h-1zM3 2h1v1h-1zM5 2h1v1h-1zM7 2h1v1h-1zM3 4h1v1h-1zM5 4h1v1h-1zM7 4h1v1h-1zM9 4h1v1h-1zM11 4h1v1h-1zM2 5h1v1h-1zM4 5h1v1h-1zM6 5h1v1h-1zM8 5h1v1h-1zM10 5h1v1h-1zM12 5h1v1h-1zM3 6h1v1h-1zM5 6h1v1h-1zM7 6h1v1h-1zM9 6h1v1h-1zM11 6h1v1h-1zM2 7h1v1h-1zM4 7h1v1h-1zM6 7h1v1h-1zM8 7h1v1h-1zM10 7h1v1h-1zM12 7h1v1h-1zM3 8h1v1h-1zM5 8h1v1h-1zM7 8h1v1h-1zM9 8h1v1h-1zM11 8h1v1h-1zM2 9h1v1h-1zM4 9h1v1h-1zM6 9h1v1h-1zM8 9h1v1h-1zM10 9h1v1h-1zM12 9h1v1h-1zM3 10h1v1h-1zM5 10h1v1h-1zM7 10h1v1h-1zM9 10h1v1h-1zM11 10h1v1h-1z"/><path fill="#000000" d="M14 3h1v1h-1zM14 4h1v1h-1zM14 5h1v1h-1zM14 6h1v1h-1zM14 7h1v1h-1zM14 8h1v1h-1zM14 9h1v1h-1zM14 10h1v1h-1zM14 11h1v1h-1zM1 12h14v1h-14z"/></svg>
<svg class="a" style="left:48px;top:142px" width="15" height="13" shape-rendering="crispEdges"><path fill="#808080" d="M2 0h5v1h-5zM1 1h1v1h-1zM7 1h1v1h-1zM0 2h1v1h-1zM8 2h6v1h-6zM0 3h1v1h-1zM13 3h1v1h-1zM0 4h1v1h-1zM13 4h1v1h-1zM0 5h1v1h-1zM2 5h11v1h-11zM0 6h2v1h-2zM0 7h1v1h-1zM1 8h1v1h-1zM13 8h1v1h-1zM1 9h1v1h-1zM13 9h1v1h-1zM2 10h1v1h-1zM13 10h1v1h-1zM2 11h12v1h-12z"/><path fill="#ffffff" d="M2 1h5v1h-5zM1 2h1v1h-1zM7 2h1v1h-1zM1 3h1v1h-1zM1 4h1v1h-1zM1 5h1v1h-1zM2 6h11v1h-11zM1 7h1v1h-1z"/><path fill="#ffff00" d="M2 2h1v1h-1zM4 2h1v1h-1zM6 2h1v1h-1zM3 3h1v1h-1zM5 3h1v1h-1zM7 3h1v1h-1zM9 3h1v1h-1zM11 3h1v1h-1zM2 4h1v1h-1zM4 4h1v1h-1zM6 4h1v1h-1zM8 4h1v1h-1zM10 4h1v1h-1zM12 4h1v1h-1zM2 7h1v1h-1zM4 7h1v1h-1zM6 7h1v1h-1zM8 7h1v1h-1zM10 7h1v1h-1zM12 7h1v1h-1zM3 8h1v1h-1zM5 8h1v1h-1zM7 8h1v1h-1zM9 8h1v1h-1zM11 8h1v1h-1zM2 9h1v1h-1zM4 9h1v1h-1zM6 9h1v1h-1zM8 9h1v1h-1zM10 9h1v1h-1zM12 9h1v1h-1zM4 10h1v1h-1zM6 10h1v1h-1zM8 10h1v1h-1zM10 10h1v1h-1zM12 10h1v1h-1z"/><path fill="#c0c0c0" d="M3 2h1v1h-1zM5 2h1v1h-1zM2 3h1v1h-1zM4 3h1v1h-1zM6 3h1v1h-1zM8 3h1v1h-1zM10 3h1v1h-1zM12 3h1v1h-1zM3 4h1v1h-1zM5 4h1v1h-1zM7 4h1v1h-1zM9 4h1v1h-1zM11 4h1v1h-1zM3 7h1v1h-1zM5 7h1v1h-1zM7 7h1v1h-1zM9 7h1v1h-1zM11 7h1v1h-1zM2 8h1v1h-1zM4 8h1v1h-1zM6 8h1v1h-1zM8 8h1v1h-1zM10 8h1v1h-1zM12 8h1v1h-1zM3 9h1v1h-1zM5 9h1v1h-1zM7 9h1v1h-1zM9 9h1v1h-1zM11 9h1v1h-1zM3 10h1v1h-1zM5 10h1v1h-1zM7 10h1v1h-1zM9 10h1v1h-1zM11 10h1v1h-1z"/><path fill="#000000" d="M14 3h1v1h-1zM14 4h1v1h-1zM13 5h2v1h-2zM13 6h2v1h-2zM13 7h2v1h-2zM14 8h1v1h-1zM14 9h1v1h-1zM14 10h1v1h-1zM14 11h1v1h-1zM3 12h12v1h-12z"/></svg>
<svg class="a" style="left:67px;top:158px" width="15" height="13" shape-rendering="crispEdges"><path fill="#808080" d="M2 0h5v1h-5zM1 1h1v1h-1zM7 1h1v1h-1zM0 2h1v1h-1zM8 2h6v1h-6zM0 3h1v1h-1zM13 3h1v1h-1zM0 4h1v1h-1zM13 4h1v1h-1zM0 5h1v1h-1zM13 5h1v1h-1zM0 6h1v1h-1zM13 6h1v1h-1zM0 7h1v1h-1zM13 7h1v1h-1zM0 8h1v1h-1zM13 8h1v1h-1zM0 9h1v1h-1zM13 9h1v1h-1zM0 10h1v1h-1zM13 10h1v1h-1zM0 11h14v1h-14z"/><path fill="#ffffff" d="M2 1h1v1h-1zM1 2h1v1h-1zM1 3h12v1h-12zM1 4h1v1h-1zM1 5h1v1h-1zM1 6h1v1h-1zM1 7h1v1h-1zM1 8h1v1h-1zM1 9h1v1h-1zM1 10h1v1h-1z"/><path fill="#ffff00" d="M3 1h1v1h-1zM5 1h1v1h-1zM2 2h1v1h-1zM4 2h1v1h-1zM6 2h1v1h-1zM2 4h1v1h-1zM4 4h1v1h-1zM6 4h1v1h-1zM8 4h1v1h-1zM10 4h1v1h-1zM12 4h1v1h-1zM3 5h1v1h-1zM5 5h1v1h-1zM7 5h1v1h-1zM9 5h1v1h-1zM11 5h1v1h-1zM2 6h1v1h-1zM4 6h1v1h-1zM6 6h1v1h-1zM8 6h1v1h-1zM10 6h1v1h-1zM12 6h1v1h-1zM3 7h1v1h-1zM5 7h1v1h-1zM7 7h1v1h-1zM9 7h1v1h-1zM11 7h1v1h-1zM2 8h1v1h-1zM4 8h1v1h-1zM6 8h1v1h-1zM8 8h1v1h-1zM10 8h1v1h-1zM12 8h1v1h-1zM3 9h1v1h-1zM5 9h1v1h-1zM7 9h1v1h-1zM9 9h1v1h-1zM11 9h1v1h-1zM2 10h1v1h-1zM4 10h1v1h-1zM6 10h1v1h-1zM8 10h1v1h-1zM10 10h1v1h-1zM12 10h1v1h-1z"/><path fill="#c0c0c0" d="M4 1h1v1h-1zM6 1h1v1h-1zM3 2h1v1h-1zM5 2h1v1h-1zM7 2h1v1h-1zM3 4h1v1h-1zM5 4h1v1h-1zM7 4h1v1h-1zM9 4h1v1h-1zM11 4h1v1h-1zM2 5h1v1h-1zM4 5h1v1h-1zM6 5h1v1h-1zM8 5h1v1h-1zM10 5h1v1h-1zM12 5h1v1h-1zM3 6h1v1h-1zM5 6h1v1h-1zM7 6h1v1h-1zM9 6h1v1h-1zM11 6h1v1h-1zM2 7h1v1h-1zM4 7h1v1h-1zM6 7h1v1h-1zM8 7h1v1h-1zM10 7h1v1h-1zM12 7h1v1h-1zM3 8h1v1h-1zM5 8h1v1h-1zM7 8h1v1h-1zM9 8h1v1h-1zM11 8h1v1h-1zM2 9h1v1h-1zM4 9h1v1h-1zM6 9h1v1h-1zM8 9h1v1h-1zM10 9h1v1h-1zM12 9h1v1h-1zM3 10h1v1h-1zM5 10h1v1h-1zM7 10h1v1h-1zM9 10h1v1h-1zM11 10h1v1h-1z"/><path fill="#000000" d="M14 3h1v1h-1zM14 4h1v1h-1zM14 5h1v1h-1zM14 6h1v1h-1zM14 7h1v1h-1zM14 8h1v1h-1zM14 9h1v1h-1zM14 10h1v1h-1zM14 11h1v1h-1zM1 12h14v1h-14z"/></svg>
<svg class="a" style="left:67px;top:174px" width="15" height="13" shape-rendering="crispEdges"><path fill="#808080" d="M2 0h5v1h-5zM1 1h1v1h-1zM7 1h1v1h-1zM0 2h1v1h-1zM8 2h6v1h-6zM0 3h1v1h-1zM13 3h1v1h-1zM0 4h1v1h-1zM13 4h1v1h-1zM0 5h1v1h-1zM13 5h1v1h-1zM0 6h1v1h-1zM13 6h1v1h-1zM0 7h1v1h-1zM13 7h1v1h-1zM0 8h1v1h-1zM13 8h1v1h-1zM0 9h1v1h-1zM13 9h1v1h-1zM0 10h1v1h-1zM13 10h1v1h-1zM0 11h14v1h-14z"/><path fill="#ffffff" d="M2 1h1v1h-1zM1 2h1v1h-1zM1 3h12v1h-12zM1 4h1v1h-1zM1 5h1v1h-1zM1 6h1v1h-1zM1 7h1v1h-1zM1 8h1v1h-1zM1 9h1v1h-1zM1 10h1v1h-1z"/><path fill="#ffff00" d="M3 1h1v1h-1zM5 1h1v1h-1zM2 2h1v1h-1zM4 2h1v1h-1zM6 2h1v1h-1zM2 4h1v1h-1zM4 4h1v1h-1zM6 4h1v1h-1zM8 4h1v1h-1zM10 4h1v1h-1zM12 4h1v1h-1zM3 5h1v1h-1zM5 5h1v1h-1zM7 5h1v1h-1zM9 5h1v1h-1zM11 5h1v1h-1zM2 6h1v1h-1zM4 6h1v1h-1zM6 6h1v1h-1zM8 6h1v1h-1zM10 6h1v1h-1zM12 6h1v1h-1zM3 7h1v1h-1zM5 7h1v1h-1zM7 7h1v1h-1zM9 7h1v1h-1zM11 7h1v1h-1zM2 8h1v1h-1zM4 8h1v1h-1zM6 8h1v1h-1zM8 8h1v1h-1zM10 8h1v1h-1zM12 8h1v1h-1zM3 9h1v1h-1zM5 9h1v1h-1zM7 9h1v1h-1zM9 9h1v1h-1zM11 9h1v1h-1zM2 10h1v1h-1zM4 10h1v1h-1zM6 10h1v1h-1zM8 10h1v1h-1zM10 10h1v1h-1zM12 10h1v1h-1z"/><path fill="#c0c0c0" d="M4 1h1v1h-1zM6 1h1v1h-1zM3 2h1v1h-1zM5 2h1v1h-1zM7 2h1v1h-1zM3 4h1v1h-1zM5 4h1v1h-1zM7 4h1v1h-1zM9 4h1v1h-1zM11 4h1v1h-1zM2 5h1v1h-1zM4 5h1v1h-1zM6 5h1v1h-1zM8 5h1v1h-1zM10 5h1v1h-1zM12 5h1v1h-1zM3 6h1v1h-1zM5 6h1v1h-1zM7 6h1v1h-1zM9 6h1v1h-1zM11 6h1v1h-1zM2 7h1v1h-1zM4 7h1v1h-1zM6 7h1v1h-1zM8 7h1v1h-1zM10 7h1v1h-1zM12 7h1v1h-1zM3 8h1v1h-1zM5 8h1v1h-1zM7 8h1v1h-1zM9 8h1v1h-1zM11 8h1v1h-1zM2 9h1v1h-1zM4 9h1v1h-1zM6 9h1v1h-1zM8 9h1v1h-1zM10 9h1v1h-1zM12 9h1v1h-1zM3 10h1v1h-1zM5 10h1v1h-1zM7 10h1v1h-1zM9 10h1v1h-1zM11 10h1v1h-1z"/><path fill="#000000" d="M14 3h1v1h-1zM14 4h1v1h-1zM14 5h1v1h-1zM14 6h1v1h-1zM14 7h1v1h-1zM14 8h1v1h-1zM14 9h1v1h-1zM14 10h1v1h-1zM14 11h1v1h-1zM1 12h14v1h-14z"/></svg>
<svg class="a" style="left:67px;top:190px" width="15" height="13" shape-rendering="crispEdges"><path fill="#808080" d="M2 0h5v1h-5zM1 1h1v1h-1zM7 1h1v1h-1zM0 2h1v1h-1zM8 2h6v1h-6zM0 3h1v1h-1zM13 3h1v1h-1zM0 4h1v1h-1zM13 4h1v1h-1zM0 5h1v1h-1zM13 5h1v1h-1zM0 6h1v1h-1zM13 6h1v1h-1zM0 7h1v1h-1zM13 7h1v1h-1zM0 8h1v1h-1zM13 8h1v1h-1zM0 9h1v1h-1zM13 9h1v1h-1zM0 10h1v1h-1zM13 10h1v1h-1zM0 11h14v1h-14z"/><path fill="#ffffff" d="M2 1h1v1h-1zM1 2h1v1h-1zM1 3h12v1h-12zM1 4h1v1h-1zM1 5h1v1h-1zM1 6h1v1h-1zM1 7h1v1h-1zM1 8h1v1h-1zM1 9h1v1h-1zM1 10h1v1h-1z"/><path fill="#ffff00" d="M3 1h1v1h-1zM5 1h1v1h-1zM2 2h1v1h-1zM4 2h1v1h-1zM6 2h1v1h-1zM2 4h1v1h-1zM4 4h1v1h-1zM6 4h1v1h-1zM8 4h1v1h-1zM10 4h1v1h-1zM12 4h1v1h-1zM3 5h1v1h-1zM5 5h1v1h-1zM7 5h1v1h-1zM9 5h1v1h-1zM11 5h1v1h-1zM2 6h1v1h-1zM4 6h1v1h-1zM6 6h1v1h-1zM8 6h1v1h-1zM10 6h1v1h-1zM12 6h1v1h-1zM3 7h1v1h-1zM5 7h1v1h-1zM7 7h1v1h-1zM9 7h1v1h-1zM11 7h1v1h-1zM2 8h1v1h-1zM4 8h1v1h-1zM6 8h1v1h-1zM8 8h1v1h-1zM10 8h1v1h-1zM12 8h1v1h-1zM3 9h1v1h-1zM5 9h1v1h-1zM7 9h1v1h-1zM9 9h1v1h-1zM11 9h1v1h-1zM2 10h1v1h-1zM4 10h1v1h-1zM6 10h1v1h-1zM8 10h1v1h-1zM10 10h1v1h-1zM12 10h1v1h-1z"/><path fill="#c0c0c0" d="M4 1h1v1h-1zM6 1h1v1h-1zM3 2h1v1h-1zM5 2h1v1h-1zM7 2h1v1h-1zM3 4h1v1h-1zM5 4h1v1h-1zM7 4h1v1h-1zM9 4h1v1h-1zM11 4h1v1h-1zM2 5h1v1h-1zM4 5h1v1h-1zM6 5h1v1h-1zM8 5h1v1h-1zM10 5h1v1h-1zM12 5h1v1h-1zM3 6h1v1h-1zM5 6h1v1h-1zM7 6h1v1h-1zM9 6h1v1h-1zM11 6h1v1h-1zM2 7h1v1h-1zM4 7h1v1h-1zM6 7h1v1h-1zM8 7h1v1h-1zM10 7h1v1h-1zM12 7h1v1h-1zM3 8h1v1h-1zM5 8h1v1h-1zM7 8h1v1h-1zM9 8h1v1h-1zM11 8h1v1h-1zM2 9h1v1h-1zM4 9h1v1h-1zM6 9h1v1h-1zM8 9h1v1h-1zM10 9h1v1h-1zM12 9h1v1h-1zM3 10h1v1h-1zM5 10h1v1h-1zM7 10h1v1h-1zM9 10h1v1h-1zM11 10h1v1h-1z"/><path fill="#000000" d="M14 3h1v1h-1zM14 4h1v1h-1zM14 5h1v1h-1zM14 6h1v1h-1zM14 7h1v1h-1zM14 8h1v1h-1zM14 9h1v1h-1zM14 10h1v1h-1zM14 11h1v1h-1zM1 12h14v1h-14z"/></svg>
<svg class="a" style="left:67px;top:206px" width="15" height="13" shape-rendering="crispEdges"><path fill="#808080" d="M2 0h5v1h-5zM1 1h1v1h-1zM7 1h1v1h-1zM0 2h1v1h-1zM8 2h6v1h-6zM0 3h1v1h-1zM13 3h1v1h-1zM0 4h1v1h-1zM13 4h1v1h-1zM0 5h1v1h-1zM13 5h1v1h-1zM0 6h1v1h-1zM13 6h1v1h-1zM0 7h1v1h-1zM13 7h1v1h-1zM0 8h1v1h-1zM13 8h1v1h-1zM0 9h1v1h-1zM13 9h1v1h-1zM0 10h1v1h-1zM13 10h1v1h-1zM0 11h14v1h-14z"/><path fill="#ffffff" d="M2 1h1v1h-1zM1 2h1v1h-1zM1 3h12v1h-12zM1 4h1v1h-1zM1 5h1v1h-1zM1 6h1v1h-1zM1 7h1v1h-1zM1 8h1v1h-1zM1 9h1v1h-1zM1 10h1v1h-1z"/><path fill="#ffff00" d="M3 1h1v1h-1zM5 1h1v1h-1zM2 2h1v1h-1zM4 2h1v1h-1zM6 2h1v1h-1zM2 4h1v1h-1zM4 4h1v1h-1zM6 4h1v1h-1zM8 4h1v1h-1zM10 4h1v1h-1zM12 4h1v1h-1zM3 5h1v1h-1zM5 5h1v1h-1zM7 5h1v1h-1zM9 5h1v1h-1zM11 5h1v1h-1zM2 6h1v1h-1zM4 6h1v1h-1zM6 6h1v1h-1zM8 6h1v1h-1zM10 6h1v1h-1zM12 6h1v1h-1zM3 7h1v1h-1zM5 7h1v1h-1zM7 7h1v1h-1zM9 7h1v1h-1zM11 7h1v1h-1zM2 8h1v1h-1zM4 8h1v1h-1zM6 8h1v1h-1zM8 8h1v1h-1zM10 8h1v1h-1zM12 8h1v1h-1zM3 9h1v1h-1zM5 9h1v1h-1zM7 9h1v1h-1zM9 9h1v1h-1zM11 9h1v1h-1zM2 10h1v1h-1zM4 10h1v1h-1zM6 10h1v1h-1zM8 10h1v1h-1zM10 10h1v1h-1zM12 10h1v1h-1z"/><path fill="#c0c0c0" d="M4 1h1v1h-1zM6 1h1v1h-1zM3 2h1v1h-1zM5 2h1v1h-1zM7 2h1v1h-1zM3 4h1v1h-1zM5 4h1v1h-1zM7 4h1v1h-1zM9 4h1v1h-1zM11 4h1v1h-1zM2 5h1v1h-1zM4 5h1v1h-1zM6 5h1v1h-1zM8 5h1v1h-1zM10 5h1v1h-1zM12 5h1v1h-1zM3 6h1v1h-1zM5 6h1v1h-1zM7 6h1v1h-1zM9 6h1v1h-1zM11 6h1v1h-1zM2 7h1v1h-1zM4 7h1v1h-1zM6 7h1v1h-1zM8 7h1v1h-1zM10 7h1v1h-1zM12 7h1v1h-1zM3 8h1v1h-1zM5 8h1v1h-1zM7 8h1v1h-1zM9 8h1v1h-1zM11 8h1v1h-1zM2 9h1v1h-1zM4 9h1v1h-1zM6 9h1v1h-1zM8 9h1v1h-1zM10 9h1v1h-1zM12 9h1v1h-1zM3 10h1v1h-1zM5 10h1v1h-1zM7 10h1v1h-1zM9 10h1v1h-1zM11 10h1v1h-1z"/><path fill="#000000" d="M14 3h1v1h-1zM14 4h1v1h-1zM14 5h1v1h-1zM14 6h1v1h-1zM14 7h1v1h-1zM14 8h1v1h-1zM14 9h1v1h-1zM14 10h1v1h-1zM14 11h1v1h-1zM1 12h14v1h-14z"/></svg>
<div class="t" style="left:29px;top:79px;font-size:11px;letter-spacing:0.0px">Stratégie Ordinateur local</div>
<div class="t" style="left:48px;top:95px;font-size:11px;letter-spacing:0.0px">Configuration ordinateur</div>
<div class="t" style="left:67px;top:111px;font-size:11px;letter-spacing:-0.172px">Paramètres du logiciel</div>
<div class="t" style="left:67px;top:127px;font-size:11px;letter-spacing:-0.159px">Paramètres Windows</div>
<div class="t" style="left:67px;top:143px;font-size:11px;letter-spacing:-0.117px">Modèles d&#x27;administration</div>
<div class="t" style="left:86px;top:159px;font-size:11px;letter-spacing:-0.212px">Composants Windows</div>
<div class="t" style="left:86px;top:175px;font-size:11px;letter-spacing:-0.15px">Système</div>
<div class="t" style="left:86px;top:191px;font-size:11px;letter-spacing:0.0px">Réseau</div>
<div class="t" style="left:86px;top:207px;font-size:11px;letter-spacing:0.0px">Imprimantes</div>
<div class="t" style="left:48px;top:223px;font-size:11px;letter-spacing:0.0px">Configuration utilisateur</div>
<div class="t" style="left:67px;top:239px;font-size:11px;letter-spacing:-0.172px">Paramètres du logiciel</div>
<div class="t" style="left:67px;top:255px;font-size:11px;letter-spacing:-0.159px">Paramètres Windows</div>
<div class="t" style="left:67px;top:271px;font-size:11px;letter-spacing:-0.117px">Modèles d&#x27;administration</div>
<div class="a raised" style="left:6px;top:559px;width:16px;height:16px"></div>
<div class="a" style="left:6px;top:559px;width:16px;height:16px;border:1px solid;border-color:#d4d0c8 #404040 #404040 #d4d0c8"><div class="a" style="left:0;top:0;right:0;bottom:0;border:1px solid;border-color:#fff #808080 #808080 #fff"></div></div>
<div class="a" style="left:22px;top:559px;width:157px;height:16px;border:1px solid;border-color:#d4d0c8 #404040 #404040 #d4d0c8;background:#d4d0c8"><div class="a" style="left:0;top:0;right:0;bottom:0;border:1px solid;border-color:#fff #808080 #808080 #fff"></div></div>
<div class="a" style="left:179px;top:559px;width:1px;height:16px;background:repeating-linear-gradient(to bottom,#fff 0 1px,#d4d0c8 1px 2px)"></div>
<div class="a" style="left:180px;top:559px;width:16px;height:16px;border:1px solid;border-color:#d4d0c8 #404040 #404040 #d4d0c8;background:#d4d0c8"><div class="a" style="left:0;top:0;right:0;bottom:0;border:1px solid;border-color:#fff #808080 #808080 #fff"></div></div>
<svg class="a" style="left:11px;top:563px" width="4" height="7" shape-rendering="crispEdges"><path d="M3 0h1v7h-1zM2 1h1v5h-1zM1 2h1v3h-1zM0 3h1v1h-1z" fill="#000"/></svg>
<svg class="a" style="left:186px;top:563px" width="4" height="7" shape-rendering="crispEdges"><path d="M0 0h1v7h-1zM1 1h1v5h-1zM2 2h1v3h-1zM3 3h1v1h-1z" fill="#000"/></svg>
<div class="a" style="left:201px;top:75px;width:713px;height:485px;background:#fff;border:1px solid;border-color:#808080 #fff #fff #808080"><div class="a" style="left:0;top:0;right:0;bottom:0;border:1px solid;border-color:#404040 #d4d0c8 #d4d0c8 #404040"></div></div>
<div class="a" style="left:203px;top:77px;width:709px;height:35px;background:#0a246a"></div>
<div class="a" style="left:413px;top:102px;width:499px;height:1px;background:#fff"></div>
<div class="a" style="left:410px;top:103px;width:502px;height:2px;background:#fff"></div>
<div class="a" style="left:408px;top:105px;width:504px;height:2px;background:#fff"></div>
<div class="a" style="left:406px;top:107px;width:506px;height:2px;background:#fff"></div>
<div class="a" style="left:405px;top:109px;width:507px;height:3px;background:#fff"></div>
<svg class="a" style="left:214px;top:83px" width="15" height="13" shape-rendering="crispEdges"><path fill="#808080" d="M2 0h5v1h-5zM1 1h1v1h-1zM7 1h1v1h-1zM0 2h1v1h-1zM8 2h6v1h-6zM0 3h1v1h-1zM13 3h1v1h-1zM0 4h1v1h-1zM13 4h1v1h-1zM0 5h1v1h-1zM13 5h1v1h-1zM0 6h1v1h-1zM13 6h1v1h-1zM0 7h1v1h-1zM13 7h1v1h-1zM0 8h1v1h-1zM13 8h1v1h-1zM0 9h1v1h-1zM13 9h1v1h-1zM0 10h1v1h-1zM13 10h1v1h-1zM0 11h14v1h-14z"/><path fill="#ffffff" d="M2 1h1v1h-1zM1 2h1v1h-1zM1 3h12v1h-12zM1 4h1v1h-1zM1 5h1v1h-1zM1 6h1v1h-1zM1 7h1v1h-1zM1 8h1v1h-1zM1 9h1v1h-1zM1 10h1v1h-1z"/><path fill="#ffff00" d="M3 1h1v1h-1zM5 1h1v1h-1zM2 2h1v1h-1zM4 2h1v1h-1zM6 2h1v1h-1zM2 4h1v1h-1zM4 4h1v1h-1zM6 4h1v1h-1zM8 4h1v1h-1zM10 4h1v1h-1zM12 4h1v1h-1zM3 5h1v1h-1zM5 5h1v1h-1zM7 5h1v1h-1zM9 5h1v1h-1zM11 5h1v1h-1zM2 6h1v1h-1zM4 6h1v1h-1zM6 6h1v1h-1zM8 6h1v1h-1zM10 6h1v1h-1zM12 6h1v1h-1zM3 7h1v1h-1zM5 7h1v1h-1zM7 7h1v1h-1zM9 7h1v1h-1zM11 7h1v1h-1zM2 8h1v1h-1zM4 8h1v1h-1zM6 8h1v1h-1zM8 8h1v1h-1zM10 8h1v1h-1zM12 8h1v1h-1zM3 9h1v1h-1zM5 9h1v1h-1zM7 9h1v1h-1zM9 9h1v1h-1zM11 9h1v1h-1zM2 10h1v1h-1zM4 10h1v1h-1zM6 10h1v1h-1zM8 10h1v1h-1zM10 10h1v1h-1zM12 10h1v1h-1z"/><path fill="#c0c0c0" d="M4 1h1v1h-1zM6 1h1v1h-1zM3 2h1v1h-1zM5 2h1v1h-1zM7 2h1v1h-1zM3 4h1v1h-1zM5 4h1v1h-1zM7 4h1v1h-1zM9 4h1v1h-1zM11 4h1v1h-1zM2 5h1v1h-1zM4 5h1v1h-1zM6 5h1v1h-1zM8 5h1v1h-1zM10 5h1v1h-1zM12 5h1v1h-1zM3 6h1v1h-1zM5 6h1v1h-1zM7 6h1v1h-1zM9 6h1v1h-1zM11 6h1v1h-1zM2 7h1v1h-1zM4 7h1v1h-1zM6 7h1v1h-1zM8 7h1v1h-1zM10 7h1v1h-1zM12 7h1v1h-1zM3 8h1v1h-1zM5 8h1v1h-1zM7 8h1v1h-1zM9 8h1v1h-1zM11 8h1v1h-1zM2 9h1v1h-1zM4 9h1v1h-1zM6 9h1v1h-1zM8 9h1v1h-1zM10 9h1v1h-1zM12 9h1v1h-1zM3 10h1v1h-1zM5 10h1v1h-1zM7 10h1v1h-1zM9 10h1v1h-1zM11 10h1v1h-1z"/><path fill="#000000" d="M14 3h1v1h-1zM14 4h1v1h-1zM14 5h1v1h-1zM14 6h1v1h-1zM14 7h1v1h-1zM14 8h1v1h-1zM14 9h1v1h-1zM14 10h1v1h-1zM14 11h1v1h-1zM1 12h14v1h-14z"/></svg>
<div class="t" style="left:236px;top:83px;font-size:11px;letter-spacing:0.0px;font-weight:bold;transform:scaleX(1.0992);transform-origin:1px 0;color:#fff">Modèles d&#x27;administration</div>
<div class="t" style="left:207px;top:118px;font-size:11px;letter-spacing:-0.092px">Sélectionnez un élément pour obtenir une</div>
<div class="t" style="left:208px;top:131px;font-size:11px;letter-spacing:-0.082px">description.</div>
<div class="a" style="left:416px;top:113px;width:496px;height:16px;background:#d4d0c8"></div>
<div class="a" style="left:415px;top:127px;width:497px;height:1px;background:#808080"></div>
<div class="a" style="left:415px;top:128px;width:497px;height:1px;background:#404040"></div>
<div class="a" style="left:763px;top:112px;width:1px;height:16px;background:#808080"></div>
<div class="a" style="left:764px;top:112px;width:1px;height:17px;background:#404040"></div>
<div class="a" style="left:765px;top:113px;width:1px;height:14px;background:#fff"></div>
<div class="a" style="left:863px;top:112px;width:1px;height:16px;background:#808080"></div>
<div class="a" style="left:864px;top:112px;width:1px;height:17px;background:#404040"></div>
<div class="a" style="left:865px;top:113px;width:1px;height:14px;background:#fff"></div>
<div class="t" style="left:420px;top:115px;font-size:11px;letter-spacing:0.0px">Paramètre</div>
<div class="t" style="left:803px;top:115px;font-size:11px;letter-spacing:0.6px;transform:scaleX(1.05);transform-origin:1px 0">État</div>
<svg class="a" style="left:420px;top:130px" width="15" height="13" shape-rendering="crispEdges"><path fill="#808080" d="M2 0h5v1h-5zM1 1h1v1h-1zM7 1h1v1h-1zM0 2h1v1h-1zM8 2h6v1h-6zM0 3h1v1h-1zM13 3h1v1h-1zM0 4h1v1h-1zM13 4h1v1h-1zM0 5h1v1h-1zM13 5h1v1h-1zM0 6h1v1h-1zM13 6h1v1h-1zM0 7h1v1h-1zM13 7h1v1h-1zM0 8h1v1h-1zM13 8h1v1h-1zM0 9h1v1h-1zM13 9h1v1h-1zM0 10h1v1h-1zM13 10h1v1h-1zM0 11h14v1h-14z"/><path fill="#ffffff" d="M2 1h1v1h-1zM1 2h1v1h-1zM1 3h12v1h-12zM1 4h1v1h-1zM1 5h1v1h-1zM1 6h1v1h-1zM1 7h1v1h-1zM1 8h1v1h-1zM1 9h1v1h-1zM1 10h1v1h-1z"/><path fill="#ffff00" d="M3 1h1v1h-1zM5 1h1v1h-1zM2 2h1v1h-1zM4 2h1v1h-1zM6 2h1v1h-1zM2 4h1v1h-1zM4 4h1v1h-1zM6 4h1v1h-1zM8 4h1v1h-1zM10 4h1v1h-1zM12 4h1v1h-1zM3 5h1v1h-1zM5 5h1v1h-1zM7 5h1v1h-1zM9 5h1v1h-1zM11 5h1v1h-1zM2 6h1v1h-1zM4 6h1v1h-1zM6 6h1v1h-1zM8 6h1v1h-1zM10 6h1v1h-1zM12 6h1v1h-1zM3 7h1v1h-1zM5 7h1v1h-1zM7 7h1v1h-1zM9 7h1v1h-1zM11 7h1v1h-1zM2 8h1v1h-1zM4 8h1v1h-1zM6 8h1v1h-1zM8 8h1v1h-1zM10 8h1v1h-1zM12 8h1v1h-1zM3 9h1v1h-1zM5 9h1v1h-1zM7 9h1v1h-1zM9 9h1v1h-1zM11 9h1v1h-1zM2 10h1v1h-1zM4 10h1v1h-1zM6 10h1v1h-1zM8 10h1v1h-1zM10 10h1v1h-1zM12 10h1v1h-1z"/><path fill="#c0c0c0" d="M4 1h1v1h-1zM6 1h1v1h-1zM3 2h1v1h-1zM5 2h1v1h-1zM7 2h1v1h-1zM3 4h1v1h-1zM5 4h1v1h-1zM7 4h1v1h-1zM9 4h1v1h-1zM11 4h1v1h-1zM2 5h1v1h-1zM4 5h1v1h-1zM6 5h1v1h-1zM8 5h1v1h-1zM10 5h1v1h-1zM12 5h1v1h-1zM3 6h1v1h-1zM5 6h1v1h-1zM7 6h1v1h-1zM9 6h1v1h-1zM11 6h1v1h-1zM2 7h1v1h-1zM4 7h1v1h-1zM6 7h1v1h-1zM8 7h1v1h-1zM10 7h1v1h-1zM12 7h1v1h-1zM3 8h1v1h-1zM5 8h1v1h-1zM7 8h1v1h-1zM9 8h1v1h-1zM11 8h1v1h-1zM2 9h1v1h-1zM4 9h1v1h-1zM6 9h1v1h-1zM8 9h1v1h-1zM10 9h1v1h-1zM12 9h1v1h-1zM3 10h1v1h-1zM5 10h1v1h-1zM7 10h1v1h-1zM9 10h1v1h-1zM11 10h1v1h-1z"/><path fill="#000000" d="M14 3h1v1h-1zM14 4h1v1h-1zM14 5h1v1h-1zM14 6h1v1h-1zM14 7h1v1h-1zM14 8h1v1h-1zM14 9h1v1h-1zM14 10h1v1h-1zM14 11h1v1h-1zM1 12h14v1h-14z"/></svg>
<svg class="a" style="left:420px;top:147px" width="15" height="13" shape-rendering="crispEdges"><path fill="#808080" d="M2 0h5v1h-5zM1 1h1v1h-1zM7 1h1v1h-1zM0 2h1v1h-1zM8 2h6v1h-6zM0 3h1v1h-1zM13 3h1v1h-1zM0 4h1v1h-1zM13 4h1v1h-1zM0 5h1v1h-1zM13 5h1v1h-1zM0 6h1v1h-1zM13 6h1v1h-1zM0 7h1v1h-1zM13 7h1v1h-1zM0 8h1v1h-1zM13 8h1v1h-1zM0 9h1v1h-1zM13 9h1v1h-1zM0 10h1v1h-1zM13 10h1v1h-1zM0 11h14v1h-14z"/><path fill="#ffffff" d="M2 1h1v1h-1zM1 2h1v1h-1zM1 3h12v1h-12zM1 4h1v1h-1zM1 5h1v1h-1zM1 6h1v1h-1zM1 7h1v1h-1zM1 8h1v1h-1zM1 9h1v1h-1zM1 10h1v1h-1z"/><path fill="#ffff00" d="M3 1h1v1h-1zM5 1h1v1h-1zM2 2h1v1h-1zM4 2h1v1h-1zM6 2h1v1h-1zM2 4h1v1h-1zM4 4h1v1h-1zM6 4h1v1h-1zM8 4h1v1h-1zM10 4h1v1h-1zM12 4h1v1h-1zM3 5h1v1h-1zM5 5h1v1h-1zM7 5h1v1h-1zM9 5h1v1h-1zM11 5h1v1h-1zM2 6h1v1h-1zM4 6h1v1h-1zM6 6h1v1h-1zM8 6h1v1h-1zM10 6h1v1h-1zM12 6h1v1h-1zM3 7h1v1h-1zM5 7h1v1h-1zM7 7h1v1h-1zM9 7h1v1h-1zM11 7h1v1h-1zM2 8h1v1h-1zM4 8h1v1h-1zM6 8h1v1h-1zM8 8h1v1h-1zM10 8h1v1h-1zM12 8h1v1h-1zM3 9h1v1h-1zM5 9h1v1h-1zM7 9h1v1h-1zM9 9h1v1h-1zM11 9h1v1h-1zM2 10h1v1h-1zM4 10h1v1h-1zM6 10h1v1h-1zM8 10h1v1h-1zM10 10h1v1h-1zM12 10h1v1h-1z"/><path fill="#c0c0c0" d="M4 1h1v1h-1zM6 1h1v1h-1zM3 2h1v1h-1zM5 2h1v1h-1zM7 2h1v1h-1zM3 4h1v1h-1zM5 4h1v1h-1zM7 4h1v1h-1zM9 4h1v1h-1zM11 4h1v1h-1zM2 5h1v1h-1zM4 5h1v1h-1zM6 5h1v1h-1zM8 5h1v1h-1zM10 5h1v1h-1zM12 5h1v1h-1zM3 6h1v1h-1zM5 6h1v1h-1zM7 6h1v1h-1zM9 6h1v1h-1zM11 6h1v1h-1zM2 7h1v1h-1zM4 7h1v1h-1zM6 7h1v1h-1zM8 7h1v1h-1zM10 7h1v1h-1zM12 7h1v1h-1zM3 8h1v1h-1zM5 8h1v1h-1zM7 8h1v1h-1zM9 8h1v1h-1zM11 8h1v1h-1zM2 9h1v1h-1zM4 9h1v1h-1zM6 9h1v1h-1zM8 9h1v1h-1zM10 9h1v1h-1zM12 9h1v1h-1zM3 10h1v1h-1zM5 10h1v1h-1zM7 10h1v1h-1zM9 10h1v1h-1zM11 10h1v1h-1z"/><path fill="#000000" d="M14 3h1v1h-1zM14 4h1v1h-1zM14 5h1v1h-1zM14 6h1v1h-1zM14 7h1v1h-1zM14 8h1v1h-1zM14 9h1v1h-1zM14 10h1v1h-1zM14 11h1v1h-1zM1 12h14v1h-14z"/></svg>
<svg class="a" style="left:420px;top:164px" width="15" height="13" shape-rendering="crispEdges"><path fill="#808080" d="M2 0h5v1h-5zM1 1h1v1h-1zM7 1h1v1h-1zM0 2h1v1h-1zM8 2h6v1h-6zM0 3h1v1h-1zM13 3h1v1h-1zM0 4h1v1h-1zM13 4h1v1h-1zM0 5h1v1h-1zM13 5h1v1h-1zM0 6h1v1h-1zM13 6h1v1h-1zM0 7h1v1h-1zM13 7h1v1h-1zM0 8h1v1h-1zM13 8h1v1h-1zM0 9h1v1h-1zM13 9h1v1h-1zM0 10h1v1h-1zM13 10h1v1h-1zM0 11h14v1h-14z"/><path fill="#ffffff" d="M2 1h1v1h-1zM1 2h1v1h-1zM1 3h12v1h-12zM1 4h1v1h-1zM1 5h1v1h-1zM1 6h1v1h-1zM1 7h1v1h-1zM1 8h1v1h-1zM1 9h1v1h-1zM1 10h1v1h-1z"/><path fill="#ffff00" d="M3 1h1v1h-1zM5 1h1v1h-1zM2 2h1v1h-1zM4 2h1v1h-1zM6 2h1v1h-1zM2 4h1v1h-1zM4 4h1v1h-1zM6 4h1v1h-1zM8 4h1v1h-1zM10 4h1v1h-1zM12 4h1v1h-1zM3 5h1v1h-1zM5 5h1v1h-1zM7 5h1v1h-1zM9 5h1v1h-1zM11 5h1v1h-1zM2 6h1v1h-1zM4 6h1v1h-1zM6 6h1v1h-1zM8 6h1v1h-1zM10 6h1v1h-1zM12 6h1v1h-1zM3 7h1v1h-1zM5 7h1v1h-1zM7 7h1v1h-1zM9 7h1v1h-1zM11 7h1v1h-1zM2 8h1v1h-1zM4 8h1v1h-1zM6 8h1v1h-1zM8 8h1v1h-1zM10 8h1v1h-1zM12 8h1v1h-1zM3 9h1v1h-1zM5 9h1v1h-1zM7 9h1v1h-1zM9 9h1v1h-1zM11 9h1v1h-1zM2 10h1v1h-1zM4 10h1v1h-1zM6 10h1v1h-1zM8 10h1v1h-1zM10 10h1v1h-1zM12 10h1v1h-1z"/><path fill="#c0c0c0" d="M4 1h1v1h-1zM6 1h1v1h-1zM3 2h1v1h-1zM5 2h1v1h-1zM7 2h1v1h-1zM3 4h1v1h-1zM5 4h1v1h-1zM7 4h1v1h-1zM9 4h1v1h-1zM11 4h1v1h-1zM2 5h1v1h-1zM4 5h1v1h-1zM6 5h1v1h-1zM8 5h1v1h-1zM10 5h1v1h-1zM12 5h1v1h-1zM3 6h1v1h-1zM5 6h1v1h-1zM7 6h1v1h-1zM9 6h1v1h-1zM11 6h1v1h-1zM2 7h1v1h-1zM4 7h1v1h-1zM6 7h1v1h-1zM8 7h1v1h-1zM10 7h1v1h-1zM12 7h1v1h-1zM3 8h1v1h-1zM5 8h1v1h-1zM7 8h1v1h-1zM9 8h1v1h-1zM11 8h1v1h-1zM2 9h1v1h-1zM4 9h1v1h-1zM6 9h1v1h-1zM8 9h1v1h-1zM10 9h1v1h-1zM12 9h1v1h-1zM3 10h1v1h-1zM5 10h1v1h-1zM7 10h1v1h-1zM9 10h1v1h-1zM11 10h1v1h-1z"/><path fill="#000000" d="M14 3h1v1h-1zM14 4h1v1h-1zM14 5h1v1h-1zM14 6h1v1h-1zM14 7h1v1h-1zM14 8h1v1h-1zM14 9h1v1h-1zM14 10h1v1h-1zM14 11h1v1h-1zM1 12h14v1h-14z"/></svg>
<div class="t" style="left:436px;top:132px;font-size:11px;letter-spacing:-0.265px">Composants Windows</div>
<div class="t" style="left:436px;top:149px;font-size:11px;letter-spacing:-0.15px">Système</div>
<div class="a" style="left:203px;top:560px;width:709px;height:17px;background:#d4d0c8"></div>
<svg class="a" style="left:195px;top:560px" width="140" height="18" shape-rendering="crispEdges"><rect x="57" y="0" width="70" height="1" fill="#d4d0c8"/><rect x="57" y="0" width="1" height="1" fill="#000"/><rect x="127" y="0" width="1" height="1" fill="#000"/><rect x="6" y="0" width="58" height="1" fill="#fff"/><rect x="6" y="0" width="1" height="1" fill="#000"/><rect x="64" y="0" width="1" height="1" fill="#000"/><rect x="57" y="1" width="70" height="1" fill="#d4d0c8"/><rect x="57" y="1" width="1" height="1" fill="#000"/><rect x="127" y="1" width="1" height="1" fill="#000"/><rect x="6" y="1" width="58" height="1" fill="#fff"/><rect x="6" y="1" width="1" height="1" fill="#000"/><rect x="64" y="1" width="1" height="1" fill="#000"/><rect x="58" y="2" width="69" height="1" fill="#d4d0c8"/><rect x="58" y="2" width="1" height="1" fill="#000"/><rect x="127" y="2" width="1" height="1" fill="#000"/><rect x="7" y="2" width="56" height="1" fill="#fff"/><rect x="7" y="2" width="1" height="1" fill="#000"/><rect x="63" y="2" width="1" height="1" fill="#000"/><rect x="58" y="3" width="68" height="1" fill="#d4d0c8"/><rect x="58" y="3" width="1" height="1" fill="#000"/><rect x="126" y="3" width="1" height="1" fill="#000"/><rect x="7" y="3" width="56" height="1" fill="#fff"/><rect x="7" y="3" width="1" height="1" fill="#000"/><rect x="63" y="3" width="1" height="1" fill="#000"/><rect x="59" y="4" width="67" height="1" fill="#d4d0c8"/><rect x="59" y="4" width="1" height="1" fill="#000"/><rect x="126" y="4" width="1" height="1" fill="#000"/><rect x="8" y="4" width="54" height="1" fill="#fff"/><rect x="8" y="4" width="1" height="1" fill="#000"/><rect x="62" y="4" width="1" height="1" fill="#000"/><rect x="59" y="5" width="66" height="1" fill="#d4d0c8"/><rect x="59" y="5" width="1" height="1" fill="#000"/><rect x="125" y="5" width="1" height="1" fill="#000"/><rect x="8" y="5" width="54" height="1" fill="#fff"/><rect x="8" y="5" width="1" height="1" fill="#000"/><rect x="62" y="5" width="1" height="1" fill="#000"/><rect x="60" y="6" width="65" height="1" fill="#d4d0c8"/><rect x="60" y="6" width="1" height="1" fill="#000"/><rect x="125" y="6" width="1" height="1" fill="#000"/><rect x="9" y="6" width="52" height="1" fill="#fff"/><rect x="9" y="6" width="1" height="1" fill="#000"/><rect x="61" y="6" width="1" height="1" fill="#000"/><rect x="60" y="7" width="64" height="1" fill="#d4d0c8"/><rect x="60" y="7" width="1" height="1" fill="#000"/><rect x="124" y="7" width="1" height="1" fill="#000"/><rect x="9" y="7" width="52" height="1" fill="#fff"/><rect x="9" y="7" width="1" height="1" fill="#000"/><rect x="61" y="7" width="1" height="1" fill="#000"/><rect x="61" y="8" width="63" height="1" fill="#d4d0c8"/><rect x="61" y="8" width="1" height="1" fill="#000"/><rect x="124" y="8" width="1" height="1" fill="#000"/><rect x="10" y="8" width="50" height="1" fill="#fff"/><rect x="10" y="8" width="1" height="1" fill="#000"/><rect x="60" y="8" width="1" height="1" fill="#000"/><rect x="61" y="9" width="63" height="1" fill="#d4d0c8"/><rect x="61" y="9" width="1" height="1" fill="#000"/><rect x="124" y="9" width="1" height="1" fill="#000"/><rect x="10" y="9" width="50" height="1" fill="#fff"/><rect x="10" y="9" width="1" height="1" fill="#000"/><rect x="60" y="9" width="1" height="1" fill="#000"/><rect x="62" y="10" width="61" height="1" fill="#d4d0c8"/><rect x="62" y="10" width="1" height="1" fill="#000"/><rect x="123" y="10" width="1" height="1" fill="#000"/><rect x="11" y="10" width="48" height="1" fill="#fff"/><rect x="11" y="10" width="1" height="1" fill="#000"/><rect x="59" y="10" width="1" height="1" fill="#000"/><rect x="62" y="11" width="61" height="1" fill="#d4d0c8"/><rect x="62" y="11" width="1" height="1" fill="#000"/><rect x="123" y="11" width="1" height="1" fill="#000"/><rect x="11" y="11" width="48" height="1" fill="#fff"/><rect x="11" y="11" width="1" height="1" fill="#000"/><rect x="59" y="11" width="1" height="1" fill="#000"/><rect x="63" y="12" width="59" height="1" fill="#d4d0c8"/><rect x="63" y="12" width="1" height="1" fill="#000"/><rect x="122" y="12" width="1" height="1" fill="#000"/><rect x="12" y="12" width="46" height="1" fill="#fff"/><rect x="12" y="12" width="1" height="1" fill="#000"/><rect x="58" y="12" width="1" height="1" fill="#000"/><rect x="63" y="13" width="59" height="1" fill="#d4d0c8"/><rect x="63" y="13" width="1" height="1" fill="#000"/><rect x="122" y="13" width="1" height="1" fill="#000"/><rect x="12" y="13" width="46" height="1" fill="#fff"/><rect x="12" y="13" width="1" height="1" fill="#000"/><rect x="58" y="13" width="1" height="1" fill="#000"/><rect x="64" y="14" width="57" height="1" fill="#d4d0c8"/><rect x="64" y="14" width="1" height="1" fill="#000"/><rect x="121" y="14" width="1" height="1" fill="#000"/><rect x="13" y="14" width="44" height="1" fill="#fff"/><rect x="13" y="14" width="1" height="1" fill="#000"/><rect x="57" y="14" width="1" height="1" fill="#000"/><rect x="64" y="15" width="57" height="1" fill="#d4d0c8"/><rect x="64" y="15" width="1" height="1" fill="#000"/><rect x="121" y="15" width="1" height="1" fill="#000"/><rect x="13" y="15" width="44" height="1" fill="#fff"/><rect x="13" y="15" width="1" height="1" fill="#000"/><rect x="57" y="15" width="1" height="1" fill="#000"/><rect x="65" y="16" width="55" height="1" fill="#d4d0c8"/><rect x="120" y="16" width="1" height="1" fill="#000"/><rect x="14" y="16" width="42" height="1" fill="#fff"/><rect x="14" y="16" width="1" height="1" fill="#000"/><rect x="56" y="16" width="1" height="1" fill="#000"/><rect x="14" y="16" width="42" height="1" fill="#808080"/><rect x="65" y="16" width="55" height="1" fill="#808080"/></svg>
<div class="a" style="left:259px;top:560px;width:655px;height:1px;background:#000"></div>
<div class="t" style="left:212px;top:563px;font-size:11px;letter-spacing:0.0px">Étendu</div>
<div class="t" style="left:265px;top:563px;font-size:11px;letter-spacing:0.129px">Standard</div>
<div class="a thin" style="left:4px;top:579px;width:690px;height:18px"></div>
<div class="a thin" style="left:696px;top:579px;width:131px;height:18px"></div>
<div class="a thin" style="left:829px;top:579px;width:83px;height:18px"></div>
<div class="a" style="left:240px;top:166px;width:438px;height:269px;background:#d4d0c8;border:1px solid;border-color:#d4d0c8 #404040 #404040 #d4d0c8"><div class="a" style="left:0;top:0;right:0;bottom:0;border:1px solid;border-color:#fff #808080 #808080 #fff"></div></div>
<div class="a" style="left:243px;top:169px;width:432px;height:18px;background:linear-gradient(to right,#0a246a,#a6caf0)"></div>
<div class="t" style="left:245px;top:172px;font-size:11px;letter-spacing:0.0px;font-weight:bold;transform:scaleX(1.0807);transform-origin:0px 0;color:#fff">Ajout/Suppression de modèles</div>
<div class="a raised" style="left:639px;top:171px;width:16px;height:14px"></div>
<div class="a raised" style="left:657px;top:171px;width:16px;height:14px"></div>
<svg class="a" style="left:644px;top:173px" width="6" height="9" shape-rendering="crispEdges"><path d="M1 0h4v1h-4zM0 1h2v2h-2zM4 1h2v3h-2zM3 4h2v1h-2zM2 5h2v1h-2zM2 7h2v2h-2z" fill="#000"/></svg>
<svg class="a" style="left:661px;top:174px" width="8" height="7" shape-rendering="crispEdges"><path d="M0 0h2v1h-2zM6 0h2v1h-2zM1 1h2v1h-2zM5 1h2v1h-2zM2 2h4v1h-4zM3 3h2v1h-2zM2 4h4v1h-4zM1 5h2v1h-2zM5 5h2v1h-2zM0 6h2v1h-2zM6 6h2v1h-2z" fill="#000"/></svg>
<div class="t" style="left:255px;top:202px;font-size:12px;letter-spacing:-0.3px;transform:scaleX(0.9396);transform-origin:1px 0"><span class="u">M</span>odèles de stratégie actuels :</div>
<div class="a" style="left:255px;top:221px;width:405px;height:163px;background:#fff;border:1px solid;border-color:#808080 #fff #fff #808080"><div class="a" style="left:0;top:0;right:0;bottom:0;border:1px solid;border-color:#404040 #d4d0c8 #d4d0c8 #404040"></div></div>
<div class="a" style="left:257px;top:223px;width:240px;height:17px;background:#d4d0c8;border-left:1px solid #fff;border-top:1px solid #fff"></div><div class="a" style="left:495px;top:223px;width:1px;height:16px;background:#808080"></div><div class="a" style="left:496px;top:223px;width:1px;height:17px;background:#404040"></div><div class="a" style="left:257px;top:238px;width:239px;height:1px;background:#808080"></div><div class="a" style="left:257px;top:239px;width:240px;height:1px;background:#404040"></div>
<div class="a" style="left:497px;top:223px;width:60px;height:17px;background:#d4d0c8;border-left:1px solid #fff;border-top:1px solid #fff"></div><div class="a" style="left:555px;top:223px;width:1px;height:16px;background:#808080"></div><div class="a" style="left:556px;top:223px;width:1px;height:17px;background:#404040"></div><div class="a" style="left:497px;top:238px;width:59px;height:1px;background:#808080"></div><div class="a" style="left:497px;top:239px;width:60px;height:1px;background:#404040"></div>
<div class="a" style="left:557px;top:223px;width:101px;height:17px;background:#d4d0c8;border-left:1px solid #fff;border-top:1px solid #fff"></div><div class="a" style="left:656px;top:223px;width:1px;height:16px;background:#808080"></div><div class="a" style="left:657px;top:223px;width:1px;height:17px;background:#404040"></div><div class="a" style="left:557px;top:238px;width:100px;height:1px;background:#808080"></div><div class="a" style="left:557px;top:239px;width:101px;height:1px;background:#404040"></div>
<div class="t" style="left:263px;top:226px;font-size:12px;letter-spacing:-0.3px;transform:scaleX(0.9565);transform-origin:1px 0">Nom</div>
<div class="t" style="left:527px;top:226px;font-size:12px;letter-spacing:-0.3px;transform:scaleX(0.9615);transform-origin:0px 0">Taille</div>
<div class="t" style="left:563px;top:226px;font-size:12px;letter-spacing:-0.3px;transform:scaleX(0.9444);transform-origin:1px 0">Modifié</div>
<div class="a" style="left:277px;top:240px;width:381px;height:17px;background:#0a246a"></div>
<div class="a" style="left:277px;top:240px;width:381px;height:17px;border:1px dotted #f0d890"></div>
<svg class="a" style="left:263px;top:240px" width="14" height="16" shape-rendering="crispEdges"><path fill="#69739c" d="M0 0h9v1h-9zM0 1h1v1h-1zM0 2h1v1h-1zM0 3h1v1h-1zM0 4h1v1h-1zM0 5h1v1h-1zM0 6h1v1h-1zM11 6h1v1h-1zM0 7h1v1h-1zM10 7h2v1h-2zM0 8h1v1h-1zM9 8h3v1h-3zM0 9h1v1h-1zM8 9h4v1h-4zM7 10h5v1h-5zM6 11h6v1h-6zM5 12h7v1h-7zM4 13h8v1h-8zM3 14h9v1h-9z"/><path fill="#060c2a" d="M9 0h1v1h-1zM10 1h2v1h-2zM11 2h2v1h-2zM12 3h2v1h-2zM12 4h2v1h-2zM12 5h2v1h-2zM12 6h2v1h-2zM12 7h2v1h-2zM12 8h2v1h-2zM12 9h2v1h-2zM12 10h2v1h-2zM12 11h2v1h-2zM12 12h2v1h-2zM12 13h2v1h-2zM12 14h2v1h-2zM0 15h14v1h-14z"/><path fill="#8791b5" d="M1 1h7v1h-7zM1 2h7v1h-7zM10 2h1v1h-1zM1 3h11v1h-11zM1 4h11v1h-11zM1 5h11v1h-11zM1 6h10v1h-10zM1 7h9v1h-9zM1 8h8v1h-8zM1 9h7v1h-7zM1 10h6v1h-6zM1 11h5v1h-5zM1 12h4v1h-4zM1 13h3v1h-3zM1 14h2v1h-2z"/><path fill="#2f84b0" d="M8 1h2v1h-2zM8 2h2v1h-2z"/><path fill="#4d5885" d="M0 10h1v1h-1zM0 11h1v1h-1zM0 12h1v1h-1zM0 13h1v1h-1zM0 14h1v1h-1z"/></svg>
<svg class="a" style="left:263px;top:257px" width="14" height="16" shape-rendering="crispEdges"><path fill="#c0c0c0" d="M0 0h9v1h-9zM0 1h1v1h-1zM0 2h1v1h-1zM0 3h1v1h-1zM0 4h1v1h-1zM0 5h1v1h-1zM0 6h1v1h-1zM11 6h1v1h-1zM0 7h1v1h-1zM10 7h2v1h-2zM0 8h1v1h-1zM9 8h3v1h-3zM0 9h1v1h-1zM8 9h4v1h-4zM7 10h5v1h-5zM6 11h6v1h-6zM5 12h7v1h-7zM4 13h8v1h-8zM3 14h9v1h-9z"/><path fill="#000000" d="M9 0h1v1h-1zM11 1h1v1h-1zM11 2h2v1h-2zM12 3h2v1h-2zM12 4h2v1h-2zM12 5h2v1h-2zM12 6h2v1h-2zM12 7h2v1h-2zM12 8h2v1h-2zM12 9h2v1h-2zM12 10h2v1h-2zM12 11h2v1h-2zM12 12h2v1h-2zM12 13h2v1h-2zM12 14h2v1h-2zM0 15h14v1h-14z"/><path fill="#ffffff" d="M1 1h7v1h-7zM1 2h7v1h-7zM10 2h1v1h-1zM1 3h11v1h-11zM1 4h11v1h-11zM1 5h11v1h-11zM1 6h10v1h-10zM1 7h9v1h-9zM1 8h8v1h-8zM1 9h7v1h-7zM1 10h6v1h-6zM1 11h5v1h-5zM1 12h4v1h-4zM1 13h3v1h-3zM1 14h2v1h-2z"/><path fill="#00ffff" d="M8 1h2v1h-2zM8 2h2v1h-2z"/><path fill="#000080" d="M10 1h1v1h-1z"/><path fill="#808080" d="M0 10h1v1h-1zM0 11h1v1h-1zM0 12h1v1h-1zM0 13h1v1h-1zM0 14h1v1h-1z"/></svg>
<svg class="a" style="left:263px;top:274px" width="14" height="16" shape-rendering="crispEdges"><path fill="#c0c0c0" d="M0 0h9v1h-9zM0 1h1v1h-1zM0 2h1v1h-1zM0 3h1v1h-1zM0 4h1v1h-1zM0 5h1v1h-1zM0 6h1v1h-1zM11 6h1v1h-1zM0 7h1v1h-1zM10 7h2v1h-2zM0 8h1v1h-1zM9 8h3v1h-3zM0 9h1v1h-1zM8 9h4v1h-4zM7 10h5v1h-5zM6 11h6v1h-6zM5 12h7v1h-7zM4 13h8v1h-8zM3 14h9v1h-9z"/><path fill="#000000" d="M9 0h1v1h-1zM11 1h1v1h-1zM11 2h2v1h-2zM12 3h2v1h-2zM12 4h2v1h-2zM12 5h2v1h-2zM12 6h2v1h-2zM12 7h2v1h-2zM12 8h2v1h-2zM12 9h2v1h-2zM12 10h2v1h-2zM12 11h2v1h-2zM12 12h2v1h-2zM12 13h2v1h-2zM12 14h2v1h-2zM0 15h14v1h-14z"/><path fill="#ffffff" d="M1 1h7v1h-7zM1 2h7v1h-7zM10 2h1v1h-1zM1 3h11v1h-11zM1 4h11v1h-11zM1 5h11v1h-11zM1 6h10v1h-10zM1 7h9v1h-9zM1 8h8v1h-8zM1 9h7v1h-7zM1 10h6v1h-6zM1 11h5v1h-5zM1 12h4v1h-4zM1 13h3v1h-3zM1 14h2v1h-2z"/><path fill="#00ffff" d="M8 1h2v1h-2zM8 2h2v1h-2z"/><path fill="#000080" d="M10 1h1v1h-1z"/><path fill="#808080" d="M0 10h1v1h-1zM0 11h1v1h-1zM0 12h1v1h-1zM0 13h1v1h-1zM0 14h1v1h-1z"/></svg>
<svg class="a" style="left:263px;top:291px" width="14" height="16" shape-rendering="crispEdges"><path fill="#c0c0c0" d="M0 0h9v1h-9zM0 1h1v1h-1zM0 2h1v1h-1zM0 3h1v1h-1zM0 4h1v1h-1zM0 5h1v1h-1zM0 6h1v1h-1zM11 6h1v1h-1zM0 7h1v1h-1zM10 7h2v1h-2zM0 8h1v1h-1zM9 8h3v1h-3zM0 9h1v1h-1zM8 9h4v1h-4zM7 10h5v1h-5zM6 11h6v1h-6zM5 12h7v1h-7zM4 13h8v1h-8zM3 14h9v1h-9z"/><path fill="#000000" d="M9 0h1v1h-1zM11 1h1v1h-1zM11 2h2v1h-2zM12 3h2v1h-2zM12 4h2v1h-2zM12 5h2v1h-2zM12 6h2v1h-2zM12 7h2v1h-2zM12 8h2v1h-2zM12 9h2v1h-2zM12 10h2v1h-2zM12 11h2v1h-2zM12 12h2v1h-2zM12 13h2v1h-2zM12 14h2v1h-2zM0 15h14v1h-14z"/><path fill="#ffffff" d="M1 1h7v1h-7zM1 2h7v1h-7zM10 2h1v1h-1zM1 3h11v1h-11zM1 4h11v1h-11zM1 5h11v1h-11zM1 6h10v1h-10zM1 7h9v1h-9zM1 8h8v1h-8zM1 9h7v1h-7zM1 10h6v1h-6zM1 11h5v1h-5zM1 12h4v1h-4zM1 13h3v1h-3zM1 14h2v1h-2z"/><path fill="#00ffff" d="M8 1h2v1h-2zM8 2h2v1h-2z"/><path fill="#000080" d="M10 1h1v1h-1z"/><path fill="#808080" d="M0 10h1v1h-1zM0 11h1v1h-1zM0 12h1v1h-1zM0 13h1v1h-1zM0 14h1v1h-1z"/></svg>
<svg class="a" style="left:263px;top:308px" width="14" height="16" shape-rendering="crispEdges"><path fill="#c0c0c0" d="M0 0h9v1h-9zM0 1h1v1h-1zM0 2h1v1h-1zM0 3h1v1h-1zM0 4h1v1h-1zM0 5h1v1h-1zM0 6h1v1h-1zM11 6h1v1h-1zM0 7h1v1h-1zM10 7h2v1h-2zM0 8h1v1h-1zM9 8h3v1h-3zM0 9h1v1h-1zM8 9h4v1h-4zM7 10h5v1h-5zM6 11h6v1h-6zM5 12h7v1h-7zM4 13h8v1h-8zM3 14h9v1h-9z"/><path fill="#000000" d="M9 0h1v1h-1zM11 1h1v1h-1zM11 2h2v1h-2zM12 3h2v1h-2zM12 4h2v1h-2zM12 5h2v1h-2zM12 6h2v1h-2zM12 7h2v1h-2zM12 8h2v1h-2zM12 9h2v1h-2zM12 10h2v1h-2zM12 11h2v1h-2zM12 12h2v1h-2zM12 13h2v1h-2zM12 14h2v1h-2zM0 15h14v1h-14z"/><path fill="#ffffff" d="M1 1h7v1h-7zM1 2h7v1h-7zM10 2h1v1h-1zM1 3h11v1h-11zM1 4h11v1h-11zM1 5h11v1h-11zM1 6h10v1h-10zM1 7h9v1h-9zM1 8h8v1h-8zM1 9h7v1h-7zM1 10h6v1h-6zM1 11h5v1h-5zM1 12h4v1h-4zM1 13h3v1h-3zM1 14h2v1h-2z"/><path fill="#00ffff" d="M8 1h2v1h-2zM8 2h2v1h-2z"/><path fill="#000080" d="M10 1h1v1h-1z"/><path fill="#808080" d="M0 10h1v1h-1zM0 11h1v1h-1zM0 12h1v1h-1zM0 13h1v1h-1zM0 14h1v1h-1z"/></svg>
<div class="t" style="left:280px;top:243px;font-size:12px;letter-spacing:-0.3px;transform:scaleX(0.9091);transform-origin:0px 0;color:#fff">conf</div>
<div class="t" style="left:526px;top:243px;font-size:12px;letter-spacing:-0.3px;transform:scaleX(0.8929);transform-origin:0px 0;color:#fff">42KB</div>
<div class="t" style="left:564px;top:243px;font-size:12px;letter-spacing:-0.3px;transform:scaleX(0.9888);transform-origin:0px 0;color:#fff">07/03/2007 13:00</div>
<div class="t" style="left:279px;top:260px;font-size:12px;letter-spacing:-0.3px;transform:scaleX(0.9394);transform-origin:1px 0">inetres</div>
<div class="t" style="left:513px;top:260px;font-size:12px;letter-spacing:-0.3px;transform:scaleX(0.925);transform-origin:1px 0">1788KB</div>
<div class="t" style="left:564px;top:260px;font-size:12px;letter-spacing:-0.3px;transform:scaleX(0.9888);transform-origin:0px 0">07/03/2007 13:00</div>
<div class="t" style="left:280px;top:277px;font-size:12px;letter-spacing:-0.3px;transform:scaleX(0.8889);transform-origin:0px 0">system</div>
<div class="t" style="left:513px;top:277px;font-size:12px;letter-spacing:-0.3px;transform:scaleX(0.925);transform-origin:1px 0">1978KB</div>
<div class="t" style="left:564px;top:277px;font-size:12px;letter-spacing:-0.3px;transform:scaleX(0.9888);transform-origin:0px 0">07/03/2007 13:00</div>
<div class="t" style="left:280px;top:294px;font-size:12px;letter-spacing:-0.3px;transform:scaleX(0.898);transform-origin:0px 0">wmplayer</div>
<div class="t" style="left:525px;top:294px;font-size:12px;letter-spacing:-0.3px;transform:scaleX(0.9259);transform-origin:1px 0">74KB</div>
<div class="t" style="left:564px;top:294px;font-size:12px;letter-spacing:-0.3px;transform:scaleX(0.9888);transform-origin:0px 0">07/03/2007 13:00</div>
<div class="t" style="left:280px;top:311px;font-size:12px;letter-spacing:-0.3px;transform:scaleX(0.963);transform-origin:0px 0">wuau</div>
<div class="t" style="left:526px;top:311px;font-size:12px;letter-spacing:-0.3px;transform:scaleX(0.8929);transform-origin:0px 0">47KB</div>
<div class="t" style="left:564px;top:311px;font-size:12px;letter-spacing:-0.3px;transform:scaleX(0.9888);transform-origin:0px 0">07/03/2007 13:00</div>
<div class="a raised" style="left:255px;top:399px;width:75px;height:23px"></div>
<div class="a raised" style="left:342px;top:399px;width:75px;height:23px"></div>
<div class="a" style="left:587px;top:399px;width:75px;height:23px;border:1px solid #000;background:#d4d0c8"><div class="a" style="left:0;top:0;right:0;bottom:0;border:1px solid;border-color:#fff #404040 #404040 #fff;box-shadow:inset -1px -1px #808080"></div></div>
<div class="t" style="left:271px;top:404px;font-size:12px;letter-spacing:-0.3px;transform:scaleX(0.9545);transform-origin:0px 0">Ajouter...</div>
<div class="a" style="left:279px;top:415px;width:7px;height:1px;background:#000"></div>
<div class="t" style="left:356px;top:404px;font-size:12px;letter-spacing:-0.3px;transform:scaleX(0.9038);transform-origin:1px 0"><span class="u">S</span>upprimer</div>
<div class="t" style="left:607px;top:404px;font-size:12px;letter-spacing:-0.3px;transform:scaleX(0.9167);transform-origin:1px 0"><span class="u">F</span>ermer</div>
</body></html>
